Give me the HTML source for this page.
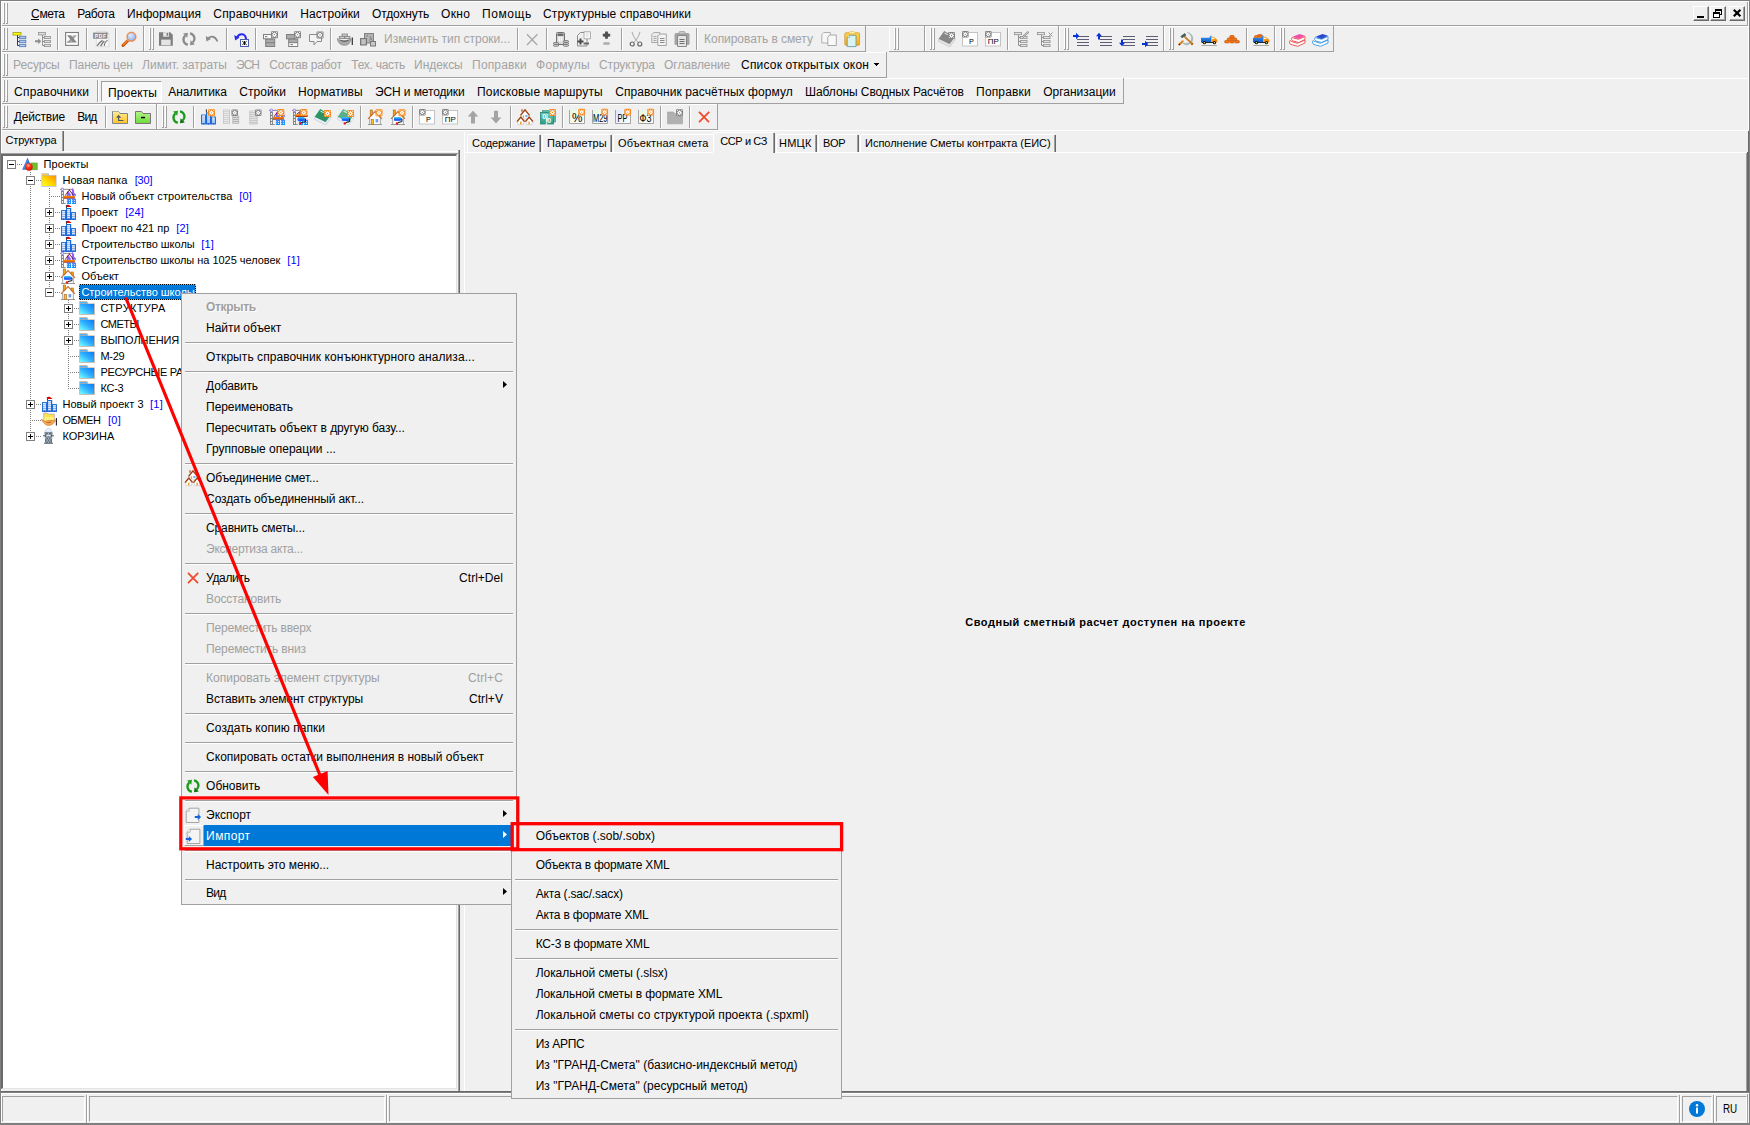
<!DOCTYPE html>
<html lang="ru"><head><meta charset="utf-8"><title>Смета</title>
<style>
html,body{margin:0;padding:0}
body{width:1750px;height:1125px;position:relative;overflow:hidden;background:#f0f0f0;font-family:"Liberation Sans",sans-serif;font-size:12px}
.a{position:absolute}
.g{position:absolute;left:0;top:0}
.t{position:absolute;white-space:nowrap;line-height:16px;font-family:"Liberation Sans",sans-serif}
svg{position:absolute;overflow:visible}

</style></head>
<body>
<div class="g" id="window-frame">
<div class="a" style="left:0px;top:0px;width:1750px;height:1px;background:#808080;"></div>
<div class="a" style="left:0px;top:1px;width:1750px;height:1px;background:#fff;"></div>
<div class="a" style="left:0px;top:0px;width:1px;height:1125px;background:#808080;"></div>
<div class="a" style="left:1px;top:1px;width:1px;height:1122px;background:#fff;"></div>
<div class="a" style="left:1749px;top:0px;width:1px;height:1125px;background:#808080;"></div>
<div class="a" style="left:1748px;top:1px;width:1px;height:129px;background:#fff;"></div>
</div>
<div class="g" id="menubar">
<div class="a" style="left:2px;top:25px;width:1746px;height:1px;background:#a0a0a0;"></div>
<div class="a" style="left:1747px;top:2px;width:1px;height:24px;background:#a0a0a0;"></div>
<div class="a" style="left:3px;top:3px;width:1px;height:20px;background:#fff;"></div>
<div class="a" style="left:4px;top:3px;width:1px;height:21px;background:#a0a0a0;"></div>
<div class="a" style="left:3px;top:23px;width:2px;height:1px;background:#a0a0a0;"></div>
<div class="a" style="left:6px;top:3px;width:1px;height:20px;background:#fff;"></div>
<div class="a" style="left:7px;top:3px;width:1px;height:21px;background:#a0a0a0;"></div>
<div class="a" style="left:6px;top:23px;width:2px;height:1px;background:#a0a0a0;"></div>
<span class="t" style="left:31.10px;top:6px;font-size:12px;color:#000;letter-spacing:-0.359px;">Смета</span>
<span class="t" style="left:77.30px;top:6px;font-size:12px;color:#000;letter-spacing:-0.402px;">Работа</span>
<span class="t" style="left:127.10px;top:6px;font-size:12px;color:#000;letter-spacing:0.035px;">Информация</span>
<span class="t" style="left:213.30px;top:6px;font-size:12px;color:#000;letter-spacing:0.170px;">Справочники</span>
<span class="t" style="left:300.30px;top:6px;font-size:12px;color:#000;letter-spacing:0.070px;">Настройки</span>
<span class="t" style="left:372.10px;top:6px;font-size:12px;color:#000;letter-spacing:-0.145px;">Отдохнуть</span>
<span class="t" style="left:441.10px;top:6px;font-size:12px;color:#000;letter-spacing:0.303px;">Окно</span>
<span class="t" style="left:482.10px;top:6px;font-size:12px;color:#000;letter-spacing:0.568px;">Помощь</span>
<span class="t" style="left:543.10px;top:6px;font-size:12px;color:#000;letter-spacing:0.102px;">Структурные справочники</span>
<div class="a" style="left:31px;top:19px;width:8px;height:1px;background:#000;"></div>
<div class="a" style="left:1693px;top:6px;width:16px;height:15px;background:#f0f0f0;box-sizing:border-box;border-top:1px solid #fff;border-left:1px solid #fff;border-right:1px solid #696969;border-bottom:1px solid #696969;"></div>
<div class="a" style="left:1694px;top:7px;width:14px;height:13px;box-sizing:border-box;border-right:1px solid #a0a0a0;border-bottom:1px solid #a0a0a0;"></div>
<div class="a" style="left:1697px;top:16px;width:7px;height:2px;background:#000;"></div>
<div class="a" style="left:1710px;top:6px;width:16px;height:15px;background:#f0f0f0;box-sizing:border-box;border-top:1px solid #fff;border-left:1px solid #fff;border-right:1px solid #696969;border-bottom:1px solid #696969;"></div>
<div class="a" style="left:1711px;top:7px;width:14px;height:13px;box-sizing:border-box;border-right:1px solid #a0a0a0;border-bottom:1px solid #a0a0a0;"></div>
<svg style="left:1710px;top:6px" width="16" height="15" viewBox="0 0 16 15" shape-rendering="crispEdges"><rect x="5" y="3" width="7" height="6" fill="#000"/><rect x="6" y="5" width="5" height="3" fill="#f0f0f0"/><rect x="3" y="6" width="7" height="6" fill="#000"/><rect x="4" y="8" width="5" height="3" fill="#fff"/></svg>
<div class="a" style="left:1729px;top:6px;width:16px;height:15px;background:#f0f0f0;box-sizing:border-box;border-top:1px solid #fff;border-left:1px solid #fff;border-right:1px solid #696969;border-bottom:1px solid #696969;"></div>
<div class="a" style="left:1730px;top:7px;width:14px;height:13px;box-sizing:border-box;border-right:1px solid #a0a0a0;border-bottom:1px solid #a0a0a0;"></div>
<svg style="left:1729px;top:6px" width="16" height="15" viewBox="0 0 16 15"><path d="M4.800 3.800l6.600 6.500M11.400 3.800l-6.600 6.500" stroke="#000" stroke-width="2.200" fill="none"/></svg>
</div>
<div class="g" id="toolbars">
<div class="a" style="left:2px;top:26px;width:1746px;height:1px;background:#fff;"></div>
<div class="a" style="left:2px;top:78px;width:1746px;height:1px;background:#fff;"></div>
<div class="a" style="left:2px;top:130px;width:1746px;height:1px;background:#fff;"></div>
<div class="a" style="left:2px;top:52px;width:885px;height:1px;background:#fff;"></div>
<div class="a" style="left:2px;top:104px;width:716px;height:1px;background:#fff;"></div>
<div class="a" style="left:2px;top:51px;width:142px;height:1px;background:#a0a0a0;"></div>
<div class="a" style="left:143px;top:26px;width:1px;height:26px;background:#a0a0a0;"></div>
<div class="a" style="left:3px;top:28px;width:1px;height:21px;background:#fff;"></div>
<div class="a" style="left:4px;top:28px;width:1px;height:22px;background:#a0a0a0;"></div>
<div class="a" style="left:3px;top:49px;width:2px;height:1px;background:#a0a0a0;"></div>
<div class="a" style="left:6px;top:28px;width:1px;height:21px;background:#fff;"></div>
<div class="a" style="left:7px;top:28px;width:1px;height:22px;background:#a0a0a0;"></div>
<div class="a" style="left:6px;top:49px;width:2px;height:1px;background:#a0a0a0;"></div>
<div class="a" style="left:144px;top:51px;width:722px;height:1px;background:#a0a0a0;"></div>
<div class="a" style="left:865px;top:26px;width:1px;height:26px;background:#a0a0a0;"></div>
<div class="a" style="left:144px;top:26px;width:1px;height:25px;background:#fff;"></div>
<div class="a" style="left:149px;top:28px;width:1px;height:21px;background:#fff;"></div>
<div class="a" style="left:150px;top:28px;width:1px;height:22px;background:#a0a0a0;"></div>
<div class="a" style="left:149px;top:49px;width:2px;height:1px;background:#a0a0a0;"></div>
<div class="a" style="left:152px;top:28px;width:1px;height:21px;background:#fff;"></div>
<div class="a" style="left:153px;top:28px;width:1px;height:22px;background:#a0a0a0;"></div>
<div class="a" style="left:152px;top:49px;width:2px;height:1px;background:#a0a0a0;"></div>
<div class="a" style="left:889px;top:51px;width:36px;height:1px;background:#a0a0a0;"></div>
<div class="a" style="left:924px;top:26px;width:1px;height:26px;background:#a0a0a0;"></div>
<div class="a" style="left:889px;top:26px;width:1px;height:25px;background:#fff;"></div>
<div class="a" style="left:894px;top:28px;width:1px;height:21px;background:#fff;"></div>
<div class="a" style="left:895px;top:28px;width:1px;height:22px;background:#a0a0a0;"></div>
<div class="a" style="left:894px;top:49px;width:2px;height:1px;background:#a0a0a0;"></div>
<div class="a" style="left:897px;top:28px;width:1px;height:21px;background:#fff;"></div>
<div class="a" style="left:898px;top:28px;width:1px;height:22px;background:#a0a0a0;"></div>
<div class="a" style="left:897px;top:49px;width:2px;height:1px;background:#a0a0a0;"></div>
<div class="a" style="left:925px;top:51px;width:134px;height:1px;background:#a0a0a0;"></div>
<div class="a" style="left:1058px;top:26px;width:1px;height:26px;background:#a0a0a0;"></div>
<div class="a" style="left:925px;top:26px;width:1px;height:25px;background:#fff;"></div>
<div class="a" style="left:930px;top:28px;width:1px;height:21px;background:#fff;"></div>
<div class="a" style="left:931px;top:28px;width:1px;height:22px;background:#a0a0a0;"></div>
<div class="a" style="left:930px;top:49px;width:2px;height:1px;background:#a0a0a0;"></div>
<div class="a" style="left:933px;top:28px;width:1px;height:21px;background:#fff;"></div>
<div class="a" style="left:934px;top:28px;width:1px;height:22px;background:#a0a0a0;"></div>
<div class="a" style="left:933px;top:49px;width:2px;height:1px;background:#a0a0a0;"></div>
<div class="a" style="left:1059px;top:51px;width:105px;height:1px;background:#a0a0a0;"></div>
<div class="a" style="left:1163px;top:26px;width:1px;height:26px;background:#a0a0a0;"></div>
<div class="a" style="left:1059px;top:26px;width:1px;height:25px;background:#fff;"></div>
<div class="a" style="left:1064px;top:28px;width:1px;height:21px;background:#fff;"></div>
<div class="a" style="left:1065px;top:28px;width:1px;height:22px;background:#a0a0a0;"></div>
<div class="a" style="left:1064px;top:49px;width:2px;height:1px;background:#a0a0a0;"></div>
<div class="a" style="left:1067px;top:28px;width:1px;height:21px;background:#fff;"></div>
<div class="a" style="left:1068px;top:28px;width:1px;height:22px;background:#a0a0a0;"></div>
<div class="a" style="left:1067px;top:49px;width:2px;height:1px;background:#a0a0a0;"></div>
<div class="a" style="left:1164px;top:51px;width:111px;height:1px;background:#a0a0a0;"></div>
<div class="a" style="left:1274px;top:26px;width:1px;height:26px;background:#a0a0a0;"></div>
<div class="a" style="left:1164px;top:26px;width:1px;height:25px;background:#fff;"></div>
<div class="a" style="left:1169px;top:28px;width:1px;height:21px;background:#fff;"></div>
<div class="a" style="left:1170px;top:28px;width:1px;height:22px;background:#a0a0a0;"></div>
<div class="a" style="left:1169px;top:49px;width:2px;height:1px;background:#a0a0a0;"></div>
<div class="a" style="left:1172px;top:28px;width:1px;height:21px;background:#fff;"></div>
<div class="a" style="left:1173px;top:28px;width:1px;height:22px;background:#a0a0a0;"></div>
<div class="a" style="left:1172px;top:49px;width:2px;height:1px;background:#a0a0a0;"></div>
<div class="a" style="left:1275px;top:51px;width:59px;height:1px;background:#a0a0a0;"></div>
<div class="a" style="left:1333px;top:26px;width:1px;height:26px;background:#a0a0a0;"></div>
<div class="a" style="left:1275px;top:26px;width:1px;height:25px;background:#fff;"></div>
<div class="a" style="left:1280px;top:28px;width:1px;height:21px;background:#fff;"></div>
<div class="a" style="left:1281px;top:28px;width:1px;height:22px;background:#a0a0a0;"></div>
<div class="a" style="left:1280px;top:49px;width:2px;height:1px;background:#a0a0a0;"></div>
<div class="a" style="left:1283px;top:28px;width:1px;height:21px;background:#fff;"></div>
<div class="a" style="left:1284px;top:28px;width:1px;height:22px;background:#a0a0a0;"></div>
<div class="a" style="left:1283px;top:49px;width:2px;height:1px;background:#a0a0a0;"></div>
<div class="a" style="left:57px;top:28px;width:1px;height:22px;background:#a0a0a0;"></div>
<div class="a" style="left:58px;top:28px;width:1px;height:22px;background:#fff;"></div>
<div class="a" style="left:86px;top:28px;width:1px;height:22px;background:#a0a0a0;"></div>
<div class="a" style="left:87px;top:28px;width:1px;height:22px;background:#fff;"></div>
<div class="a" style="left:115px;top:28px;width:1px;height:22px;background:#a0a0a0;"></div>
<div class="a" style="left:116px;top:28px;width:1px;height:22px;background:#fff;"></div>
<div class="a" style="left:226px;top:28px;width:1px;height:22px;background:#a0a0a0;"></div>
<div class="a" style="left:227px;top:28px;width:1px;height:22px;background:#fff;"></div>
<div class="a" style="left:255px;top:28px;width:1px;height:22px;background:#a0a0a0;"></div>
<div class="a" style="left:256px;top:28px;width:1px;height:22px;background:#fff;"></div>
<div class="a" style="left:330px;top:28px;width:1px;height:22px;background:#a0a0a0;"></div>
<div class="a" style="left:331px;top:28px;width:1px;height:22px;background:#fff;"></div>
<div class="a" style="left:517px;top:28px;width:1px;height:22px;background:#a0a0a0;"></div>
<div class="a" style="left:518px;top:28px;width:1px;height:22px;background:#fff;"></div>
<div class="a" style="left:546px;top:28px;width:1px;height:22px;background:#a0a0a0;"></div>
<div class="a" style="left:547px;top:28px;width:1px;height:22px;background:#fff;"></div>
<div class="a" style="left:621px;top:28px;width:1px;height:22px;background:#a0a0a0;"></div>
<div class="a" style="left:622px;top:28px;width:1px;height:22px;background:#fff;"></div>
<div class="a" style="left:696px;top:28px;width:1px;height:22px;background:#a0a0a0;"></div>
<div class="a" style="left:697px;top:28px;width:1px;height:22px;background:#fff;"></div>
<div class="a" style="left:1007px;top:28px;width:1px;height:22px;background:#a0a0a0;"></div>
<div class="a" style="left:1008px;top:28px;width:1px;height:22px;background:#fff;"></div>
<div class="a" style="left:1246px;top:28px;width:1px;height:22px;background:#a0a0a0;"></div>
<div class="a" style="left:1247px;top:28px;width:1px;height:22px;background:#fff;"></div>
<div class="a" style="left:2px;top:77px;width:885px;height:1px;background:#a0a0a0;"></div>
<div class="a" style="left:886px;top:52px;width:1px;height:26px;background:#a0a0a0;"></div>
<div class="a" style="left:3px;top:54px;width:1px;height:21px;background:#fff;"></div>
<div class="a" style="left:4px;top:54px;width:1px;height:22px;background:#a0a0a0;"></div>
<div class="a" style="left:3px;top:75px;width:2px;height:1px;background:#a0a0a0;"></div>
<div class="a" style="left:6px;top:54px;width:1px;height:21px;background:#fff;"></div>
<div class="a" style="left:7px;top:54px;width:1px;height:22px;background:#a0a0a0;"></div>
<div class="a" style="left:6px;top:75px;width:2px;height:1px;background:#a0a0a0;"></div>
<span class="t" style="left:13.10px;top:57px;font-size:12px;color:#a3a3a3;letter-spacing:-0.121px;">Ресурсы</span>
<span class="t" style="left:69.10px;top:57px;font-size:12px;color:#a3a3a3;letter-spacing:-0.114px;">Панель цен</span>
<span class="t" style="left:142.10px;top:57px;font-size:12px;color:#a3a3a3;letter-spacing:-0.014px;">Лимит. затраты</span>
<span class="t" style="left:236.10px;top:57px;font-size:12px;color:#a3a3a3;letter-spacing:-1.084px;">ЭСН</span>
<span class="t" style="left:269.30px;top:57px;font-size:12px;color:#a3a3a3;letter-spacing:-0.238px;">Состав работ</span>
<span class="t" style="left:351.30px;top:57px;font-size:12px;color:#a3a3a3;letter-spacing:-0.269px;">Тех. часть</span>
<span class="t" style="left:414.10px;top:57px;font-size:12px;color:#a3a3a3;letter-spacing:-0.056px;">Индексы</span>
<span class="t" style="left:472.10px;top:57px;font-size:12px;color:#a3a3a3;letter-spacing:0.159px;">Поправки</span>
<span class="t" style="left:536.10px;top:57px;font-size:12px;color:#a3a3a3;letter-spacing:0.230px;">Формулы</span>
<span class="t" style="left:599.10px;top:57px;font-size:12px;color:#a3a3a3;letter-spacing:-0.142px;">Структура</span>
<span class="t" style="left:664.10px;top:57px;font-size:12px;color:#a3a3a3;letter-spacing:-0.078px;">Оглавление</span>
<span class="t" style="left:741.10px;top:57px;font-size:12px;color:#000;letter-spacing:0.172px;">Список открытых окон</span>
<svg style="left:874px;top:63px" width="5" height="3" viewBox="0 0 5 3" shape-rendering="crispEdges"><path d="M0 0h5v1h-1v1h-1v1h-1v-1h-1v-1h-1z" fill="#000"/></svg>
<span class="t" style="left:384.10px;top:31px;font-size:12px;color:#a3a3a3;letter-spacing:-0.005px;">Изменить тип строки...</span>
<span class="t" style="left:704.10px;top:31px;font-size:12px;color:#a3a3a3;letter-spacing:-0.060px;">Копировать в смету</span>
<div class="a" style="left:2px;top:103px;width:1122px;height:1px;background:#a0a0a0;"></div>
<div class="a" style="left:1123px;top:78px;width:1px;height:26px;background:#a0a0a0;"></div>
<div class="a" style="left:3px;top:80px;width:1px;height:21px;background:#fff;"></div>
<div class="a" style="left:4px;top:80px;width:1px;height:22px;background:#a0a0a0;"></div>
<div class="a" style="left:3px;top:101px;width:2px;height:1px;background:#a0a0a0;"></div>
<div class="a" style="left:6px;top:80px;width:1px;height:21px;background:#fff;"></div>
<div class="a" style="left:7px;top:80px;width:1px;height:22px;background:#a0a0a0;"></div>
<div class="a" style="left:6px;top:101px;width:2px;height:1px;background:#a0a0a0;"></div>
<div class="a" style="left:97px;top:80px;width:1px;height:22px;background:#a0a0a0;"></div>
<div class="a" style="left:98px;top:80px;width:1px;height:22px;background:#fff;"></div>
<div class="a" style="left:101px;top:81px;width:61px;height:21px;background:#f8f8f8;box-sizing:border-box;border-top:1px solid #a0a0a0;border-left:1px solid #a0a0a0;border-right:1px solid #fff;border-bottom:1px solid #fff;"></div>
<span class="t" style="left:14.10px;top:84px;font-size:12px;color:#000;letter-spacing:0.210px;">Справочники</span>
<span class="t" style="left:108.10px;top:85px;font-size:12px;color:#000;letter-spacing:0.107px;">Проекты</span>
<span class="t" style="left:168.30px;top:84px;font-size:12px;color:#000;letter-spacing:-0.101px;">Аналитика</span>
<span class="t" style="left:239.30px;top:84px;font-size:12px;color:#000;letter-spacing:0.071px;">Стройки</span>
<span class="t" style="left:298.10px;top:84px;font-size:12px;color:#000;letter-spacing:0.091px;">Нормативы</span>
<span class="t" style="left:375.10px;top:84px;font-size:12px;color:#000;letter-spacing:-0.131px;">ЭСН и методики</span>
<span class="t" style="left:477.10px;top:84px;font-size:12px;color:#000;letter-spacing:0.156px;">Поисковые маршруты</span>
<span class="t" style="left:615.30px;top:84px;font-size:12px;color:#000;letter-spacing:0.057px;">Справочник расчётных формул</span>
<span class="t" style="left:805.10px;top:84px;font-size:12px;color:#000;letter-spacing:-0.087px;">Шаблоны Сводных Расчётов</span>
<span class="t" style="left:976.10px;top:84px;font-size:12px;color:#000;letter-spacing:0.159px;">Поправки</span>
<span class="t" style="left:1043.30px;top:84px;font-size:12px;color:#000;letter-spacing:-0.019px;">Организации</span>
<div class="a" style="left:2px;top:129px;width:155px;height:1px;background:#a0a0a0;"></div>
<div class="a" style="left:156px;top:104px;width:1px;height:26px;background:#a0a0a0;"></div>
<div class="a" style="left:3px;top:106px;width:1px;height:21px;background:#fff;"></div>
<div class="a" style="left:4px;top:106px;width:1px;height:22px;background:#a0a0a0;"></div>
<div class="a" style="left:3px;top:127px;width:2px;height:1px;background:#a0a0a0;"></div>
<div class="a" style="left:6px;top:106px;width:1px;height:21px;background:#fff;"></div>
<div class="a" style="left:7px;top:106px;width:1px;height:22px;background:#a0a0a0;"></div>
<div class="a" style="left:6px;top:127px;width:2px;height:1px;background:#a0a0a0;"></div>
<div class="a" style="left:157px;top:129px;width:561px;height:1px;background:#a0a0a0;"></div>
<div class="a" style="left:717px;top:104px;width:1px;height:26px;background:#a0a0a0;"></div>
<div class="a" style="left:157px;top:104px;width:1px;height:25px;background:#fff;"></div>
<div class="a" style="left:162px;top:106px;width:1px;height:21px;background:#fff;"></div>
<div class="a" style="left:163px;top:106px;width:1px;height:22px;background:#a0a0a0;"></div>
<div class="a" style="left:162px;top:127px;width:2px;height:1px;background:#a0a0a0;"></div>
<div class="a" style="left:165px;top:106px;width:1px;height:21px;background:#fff;"></div>
<div class="a" style="left:166px;top:106px;width:1px;height:22px;background:#a0a0a0;"></div>
<div class="a" style="left:165px;top:127px;width:2px;height:1px;background:#a0a0a0;"></div>
<span class="t" style="left:13.70px;top:109px;font-size:12px;color:#000;letter-spacing:-0.167px;">Действие</span>
<span class="t" style="left:77.30px;top:109px;font-size:12px;color:#000;letter-spacing:-0.859px;">Вид</span>
<div class="a" style="left:105px;top:106px;width:1px;height:22px;background:#a0a0a0;"></div>
<div class="a" style="left:106px;top:106px;width:1px;height:22px;background:#fff;"></div>
<div class="a" style="left:193px;top:106px;width:1px;height:22px;background:#a0a0a0;"></div>
<div class="a" style="left:194px;top:106px;width:1px;height:22px;background:#fff;"></div>
<div class="a" style="left:360px;top:106px;width:1px;height:22px;background:#a0a0a0;"></div>
<div class="a" style="left:361px;top:106px;width:1px;height:22px;background:#fff;"></div>
<div class="a" style="left:412px;top:106px;width:1px;height:22px;background:#a0a0a0;"></div>
<div class="a" style="left:413px;top:106px;width:1px;height:22px;background:#fff;"></div>
<div class="a" style="left:510px;top:106px;width:1px;height:22px;background:#a0a0a0;"></div>
<div class="a" style="left:511px;top:106px;width:1px;height:22px;background:#fff;"></div>
<div class="a" style="left:562px;top:106px;width:1px;height:22px;background:#a0a0a0;"></div>
<div class="a" style="left:563px;top:106px;width:1px;height:22px;background:#fff;"></div>
<div class="a" style="left:660px;top:106px;width:1px;height:22px;background:#a0a0a0;"></div>
<div class="a" style="left:661px;top:106px;width:1px;height:22px;background:#fff;"></div>
<div class="a" style="left:689px;top:106px;width:1px;height:22px;background:#a0a0a0;"></div>
<div class="a" style="left:690px;top:106px;width:1px;height:22px;background:#fff;"></div>
<svg width="0" height="0" style="left:0;top:0"><defs><linearGradient id="gy" x1="1" y1="0" x2="0" y2="1"><stop offset="0" stop-color="#ff8c00"/><stop offset="0.55" stop-color="#ffd800"/><stop offset="1" stop-color="#ffff20"/></linearGradient><linearGradient id="gb" x1="1" y1="0" x2="0" y2="1"><stop offset="0" stop-color="#0a78ff"/><stop offset="0.5" stop-color="#30b0ff"/><stop offset="1" stop-color="#78ffff"/></linearGradient><linearGradient id="gyf" x1="0" y1="0" x2="0" y2="1"><stop offset="0" stop-color="#ffec90"/><stop offset="1" stop-color="#ffc428"/></linearGradient><linearGradient id="ggf" x1="0" y1="0" x2="0" y2="1"><stop offset="0" stop-color="#b8f48c"/><stop offset="1" stop-color="#68dc38"/></linearGradient><linearGradient id="gcl" x1="0" y1="0" x2="0" y2="1"><stop offset="0" stop-color="#ffd450"/><stop offset="1" stop-color="#ffa808"/></linearGradient><linearGradient id="grl" x1="0" y1="0" x2="0" y2="1"><stop offset="0" stop-color="#40d0ff"/><stop offset="1" stop-color="#0030ff"/></linearGradient><linearGradient id="gor" x1="0" y1="0" x2="0" y2="1"><stop offset="0" stop-color="#ff8800"/><stop offset="0.45" stop-color="#f87400"/><stop offset="1" stop-color="#802020"/></linearGradient><linearGradient id="gtl" x1="0" y1="0" x2="1" y2="1"><stop offset="0" stop-color="#e4f8e0"/><stop offset="1" stop-color="#ffffff"/></linearGradient><linearGradient id="gtb" x1="0" y1="0" x2="1" y2="1"><stop offset="0" stop-color="#d8e8ff"/><stop offset="1" stop-color="#ffffff"/></linearGradient><linearGradient id="gte" x1="0" y1="0" x2="0" y2="1"><stop offset="0" stop-color="#6cc8b4"/><stop offset="1" stop-color="#2a9c88"/></linearGradient><linearGradient id="gpv" x1="0" y1="0" x2="0" y2="1"><stop offset="0" stop-color="#b45cf0"/><stop offset="1" stop-color="#7070ff"/></linearGradient><linearGradient id="gbl" x1="0" y1="0" x2="0" y2="1"><stop offset="0" stop-color="#4c84ff"/><stop offset="1" stop-color="#0894ff"/></linearGradient><linearGradient id="gwp" x1="0" y1="0" x2="0" y2="1"><stop offset="0" stop-color="#a8ccf8"/><stop offset="1" stop-color="#6c9cec"/></linearGradient><linearGradient id="gtk" x1="0" y1="0" x2="0" y2="1"><stop offset="0" stop-color="#3c94f4"/><stop offset="1" stop-color="#0c58c4"/></linearGradient><linearGradient id="gcb" x1="0" y1="0" x2="1" y2="1"><stop offset="0" stop-color="#ffb828"/><stop offset="1" stop-color="#f07000"/></linearGradient><radialGradient id="grs" cx="0.4" cy="0.3" r="0.7"><stop offset="0" stop-color="#ffb0a0"/><stop offset="0.4" stop-color="#ff3818"/><stop offset="1" stop-color="#d01000"/></radialGradient><radialGradient id="gln" cx="0.4" cy="0.35" r="0.7"><stop offset="0" stop-color="#e0ecff"/><stop offset="1" stop-color="#88aaf0"/></radialGradient></defs></svg>
<svg style="left:12px;top:31px" width="16" height="16" viewBox="0 0 16 16"><rect x="1" y="1.5" width="8" height="2.6" fill="#ffff00" stroke="#a09a28" stroke-width="0.8"/><path d="M5.5 4.2V14.5M5.5 6.5H7.5M5.5 10.5H7.5M5.5 14.5H7.5" stroke="#28386c" stroke-width="1" fill="none"/><rect x="7.6" y="5.3" width="6.2" height="2.4" fill="#a8d0f4" stroke="#5874b0" stroke-width="0.8"/><rect x="7.6" y="9.3" width="6.2" height="2.4" fill="#a8d0f4" stroke="#5874b0" stroke-width="0.8"/><rect x="7.6" y="13.3" width="6.2" height="2.4" fill="#a8d0f4" stroke="#5874b0" stroke-width="0.8"/></svg>
<svg style="left:35px;top:31px" width="16" height="16" viewBox="0 0 16 16"><rect x="3.4" y="1.5" width="7" height="2.4" fill="#e0e0e0" stroke="#909090" stroke-width="0.8"/><path d="M7.5 4V14.5M7.5 6.5H9.5M7.5 10.5H9.5M7.5 14.5H9.5" stroke="#909090" stroke-width="1" fill="none"/><rect x="9.5" y="5.4" width="6" height="2.2" fill="#e0e0e0" stroke="#909090" stroke-width="0.8"/><rect x="9.5" y="9.4" width="6" height="2.2" fill="#e0e0e0" stroke="#909090" stroke-width="0.8"/><rect x="9.5" y="13.4" width="6" height="2.2" fill="#e0e0e0" stroke="#909090" stroke-width="0.8"/><path d="M0 9.2h3.2v-2l3 3l-3 3v-2h-3.2z" fill="#8c8c8c"/></svg>
<svg style="left:64px;top:31px" width="16" height="16" viewBox="0 0 16 16"><rect x="1.600" y="1.500" width="12.800" height="12.900" fill="#fdfdfd" stroke="#7e7e7e" stroke-width="1.100"/><path d="M9.600 4.200H12.900L6.400 11.600H3z" fill="#a4a4a4"/><path d="M3 4.200H7L12.900 11.600H8.900z" fill="#878787"/><path d="M3 10.500h5.500l0.900 1.100H3z" fill="#909090"/></svg>
<svg style="left:93px;top:31px" width="16" height="16" viewBox="0 0 16 16"><path d="M3.300 0.400h10l2.600 2.600v12.700h-12.600z" fill="#f6f6f6" stroke="#c8c8c8" stroke-width="0.500"/><path d="M13.300 0.400v2.600h2.600z" fill="#b0b0b0"/><rect x="0.100" y="1.600" width="14.300" height="6.100" fill="#8a8a8a"/><path d="M4.100 14.900C6 12 7.500 10.500 9.600 9.400M7.600 15.100C8.800 13 10 11.200 11.300 10" stroke="#787878" stroke-width="1.300" fill="none"/><path d="M14.700 9.100C12.500 10.500 11.300 12.500 11.300 15.100" stroke="#787878" stroke-width="1.100" fill="none"/><text x="1.700" y="6.900" font-family="Liberation Sans,sans-serif" font-size="5" font-weight="bold" fill="#fff" textLength="11.300" opacity="0.99">PDF</text></svg>
<svg style="left:121px;top:31px" width="16" height="16" viewBox="0 0 16 16"><path d="M7.2 9.2L2 14.4" stroke="#c85000" stroke-width="3" stroke-linecap="round"/><path d="M7 9L2.2 13.8" stroke="#f08838" stroke-width="1.3" stroke-linecap="round"/><circle cx="10.4" cy="5.8" r="4.4" fill="url(#gln)" stroke="#e88040" stroke-width="1.4"/><circle cx="10.4" cy="5.8" r="5" fill="none" stroke="#f8c8a0" stroke-width="0.5"/></svg>
<svg style="left:158px;top:31px" width="16" height="16" viewBox="0 0 16 16"><path d="M1 1.2h11.200l2.600 2.600v11h-13.800z" fill="#7e7e7e"/><rect x="5.200" y="1.200" width="5.800" height="4.500" fill="#e8e8e8"/><rect x="8.600" y="2" width="1.600" height="2.800" fill="#7e7e7e"/><rect x="3.200" y="8.600" width="9.400" height="5.600" fill="#e4e4e4"/></svg>
<svg style="left:181px;top:31px" width="16" height="16" viewBox="0 0 16 16"><path d="M6.9 13.7A5.2 5.2 0 0 1 4.2 4.7" fill="none" stroke="#8c8c8c" stroke-width="2.3"/><path d="M2.1 2.4L6.9 1.8L6.3 6.8z" fill="#8c8c8c"/><path d="M9 2.3A5.2 5.2 0 0 1 11.7 11.3" fill="none" stroke="#8c8c8c" stroke-width="2.3"/><path d="M13.8 13.6L9 14.2L9.600 9.200z" fill="#8c8c8c"/></svg>
<svg style="left:204px;top:31px" width="16" height="16" viewBox="0 0 16 16"><path d="M3.5 8.5C6 4.5 11 4.5 13.5 10.5" fill="none" stroke="#8c8c8c" stroke-width="1.8"/><path d="M1.8 5l.6 5.5l4.6-2.4z" fill="#8c8c8c"/></svg>
<svg style="left:233px;top:31px" width="16" height="16" viewBox="0 0 16 16"><path d="M4 6.5C6 1.8 12.5 2 13 8" fill="none" stroke="#2a2af0" stroke-width="2"/><path d="M1.2 4.2l1 5.2l4.4-2.8z" fill="#2a2af0"/><rect x="7.5" y="8.5" width="8" height="7" fill="#fff" stroke="#4c5cb0" stroke-width="1"/><path d="M11.5 10v4M9.3 10.2l4.4 3.6M13.7 10.2l-4.4 3.6" stroke="#000" stroke-width="0.9"/></svg>
<svg style="left:262px;top:31px" width="16" height="16" viewBox="0 0 16 16"><rect x="3.7" y="8" width="9" height="7.5" fill="#ababab" stroke="#808080" stroke-width="1"/><path d="M3.7 11.7h9" stroke="#808080" stroke-width="1"/><rect x="1.5" y="3.5" width="8.5" height="4.3" fill="#fafafa" stroke="#808080" stroke-width="1"/><path d="M3 5.7h2.4" stroke="#707070" stroke-width="1"/><rect x="9" y="0.2" width="7" height="7" rx="1" fill="#828282"/><path d="M12.5 1.25L14.95 3.7L12.5 6.15L10.05 3.7z" fill="#fff"/><rect x="9.84" y="1.04" width="0.98" height="0.98" fill="#fff"/><rect x="9.84" y="5.38" width="0.98" height="0.98" fill="#fff"/><rect x="14.18" y="1.04" width="0.98" height="0.98" fill="#fff"/><rect x="14.18" y="5.38" width="0.98" height="0.98" fill="#fff"/><circle cx="12.5" cy="3.7" r="0.63" fill="#828282"/></svg>
<svg style="left:285px;top:31px" width="16" height="16" viewBox="0 0 16 16"><rect x="3.7" y="8" width="9" height="7.5" fill="#ababab" stroke="#808080" stroke-width="1"/><path d="M3.7 11.7h9" stroke="#808080" stroke-width="1"/><rect x="4.2" y="12.2" width="8" height="2.8" fill="#fafafa"/><path d="M5.5 13.6h2.4" stroke="#707070" stroke-width="1"/><rect x="1.5" y="3.5" width="8.5" height="4.3" fill="#ababab" stroke="#808080" stroke-width="1"/><rect x="9" y="0.2" width="7" height="7" rx="1" fill="#828282"/><path d="M12.5 1.25L14.95 3.7L12.5 6.15L10.05 3.7z" fill="#fff"/><rect x="9.84" y="1.04" width="0.98" height="0.98" fill="#fff"/><rect x="9.84" y="5.38" width="0.98" height="0.98" fill="#fff"/><rect x="14.18" y="1.04" width="0.98" height="0.98" fill="#fff"/><rect x="14.18" y="5.38" width="0.98" height="0.98" fill="#fff"/><circle cx="12.5" cy="3.7" r="0.63" fill="#828282"/></svg>
<svg style="left:308px;top:31px" width="16" height="16" viewBox="0 0 16 16"><path d="M1.5 3.5h9v3h3v4h-4.5l-3 3.5v-3.5h-4.5z" fill="#f4f4f4" stroke="#8c8c8c" stroke-width="1"/><rect x="8.5" y="0.5" width="7" height="7" rx="1" fill="#828282"/><path d="M12.0 1.55L14.45 4.0L12.0 6.45L9.55 4.0z" fill="#fff"/><rect x="9.34" y="1.34" width="0.98" height="0.98" fill="#fff"/><rect x="9.34" y="5.68" width="0.98" height="0.98" fill="#fff"/><rect x="13.68" y="1.34" width="0.98" height="0.98" fill="#fff"/><rect x="13.68" y="5.68" width="0.98" height="0.98" fill="#fff"/><circle cx="12.0" cy="4.0" r="0.63" fill="#828282"/></svg>
<svg style="left:337px;top:31px" width="16" height="16" viewBox="0 0 16 16"><rect x="5" y="3" width="5.5" height="2.2" fill="#d0d0d0" stroke="#808080" stroke-width="0.8"/><rect x="2.3" y="5.4" width="5.2" height="2.2" fill="#d0d0d0" stroke="#808080" stroke-width="0.8"/><rect x="7.7" y="5.4" width="5.2" height="2.2" fill="#d0d0d0" stroke="#808080" stroke-width="0.8"/><path d="M0.3 7.5C1 12.5 4 14.3 7.5 14.3S13.5 12.5 14 7.5C10 10.5 4 10.5 .3 7.5z" fill="#a8a8a8" stroke="#808080" stroke-width="0.6"/><path d="M3.5 9.3c2.5 1.3 5.5 1.3 8 0" stroke="#606060" stroke-width="1.2" fill="none"/><path d="M15.3 6.5v7.5" stroke="#303030" stroke-width="1.2"/></svg>
<svg style="left:360px;top:31px" width="16" height="16" viewBox="0 0 16 16"><rect x="4.5" y="2.5" width="9" height="9.5" fill="#b4b4b4" stroke="#808080" stroke-width="1"/><path d="M6 4.8h2M10 5l1 2.5l-1.5 2M11 7.5l1.5 2" stroke="#707070" stroke-width="0.8" fill="none"/><rect x="0.5" y="7.5" width="6" height="6.5" fill="#a8a8a8" stroke="#787878" stroke-width="1"/><path d="M2.3 8.5v4.5M3.6 8.5v4.5M4.9 8.5v4.5" stroke="#e0e0e0" stroke-width="0.6"/><rect x="10.5" y="10.5" width="5" height="4.5" fill="#c8c8c8" stroke="#787878" stroke-width="1"/></svg>
<svg style="left:524px;top:31px" width="16" height="16" viewBox="0 0 16 16"><path d="M3 3.2L13.2 14M13.4 3.2L3 14" stroke="#a8a8a8" stroke-width="1.3" fill="none"/></svg>
<svg style="left:553px;top:31px" width="16" height="16" viewBox="0 0 16 16"><rect x="3.5" y="1.5" width="8" height="12" rx="1" fill="#d8d8d8" stroke="#707070" stroke-width="1"/><rect x="4.5" y="2.5" width="6" height="2.4" fill="#686868"/><path d="M5 7h5M5 9h5M6.5 5.8v5M8.5 5.8v5" stroke="#fff" stroke-width="0.7"/><rect x="0.5" y="13.6" width="5" height="1.6" rx="0.8" fill="#e8e8e8" stroke="#606060" stroke-width="0.8"/><rect x="0.5" y="11.6" width="5" height="1.6" rx="0.8" fill="#e8e8e8" stroke="#606060" stroke-width="0.8"/><rect x="10.5" y="13.6" width="5" height="1.6" rx="0.8" fill="#e8e8e8" stroke="#606060" stroke-width="0.8"/><rect x="10.5" y="11.6" width="5" height="1.6" rx="0.8" fill="#e8e8e8" stroke="#606060" stroke-width="0.8"/><rect x="10.5" y="9.6" width="5" height="1.6" rx="0.8" fill="#e8e8e8" stroke="#606060" stroke-width="0.8"/></svg>
<svg style="left:576px;top:31px" width="16" height="16" viewBox="0 0 16 16"><path d="M4.5 1.5h6.5v13.5h-9.5v-10.5z" fill="#f0f0f0" stroke="#8c8c8c" stroke-width="1"/><rect x="8" y="0.8" width="6.5" height="7" fill="#f8f8f8" stroke="#a0a0a0" stroke-width="0.8"/><path d="M10 3h2.5M10 5h2.5" stroke="#c0c0c0" stroke-width="0.6"/><path d="M1.5 10.5h6M4.5 7.5v6" stroke="#484848" stroke-width="2"/><rect x="7.5" y="11.5" width="5.5" height="2" fill="#686868"/></svg>
<svg style="left:599px;top:31px" width="16" height="16" viewBox="0 0 16 16"><path d="M7.500 0.600v7.200M3.800 4.200h7.400" stroke="#505050" stroke-width="2.800"/><circle cx="7.500" cy="4.200" r="2.300" fill="#505050"/><rect x="4.200" y="11.200" width="6.600" height="2.600" rx="1" fill="#acacac"/></svg>
<svg style="left:628px;top:31px" width="16" height="16" viewBox="0 0 16 16"><path d="M4 0.8C5 5 7.5 9 10.5 11.8M12 0.8C11 5 8.5 9 5.5 11.8" stroke="#a8a8a8" stroke-width="1" fill="none"/><circle cx="4.2" cy="13" r="2" fill="none" stroke="#686868" stroke-width="1.2"/><circle cx="11.8" cy="13" r="2" fill="none" stroke="#686868" stroke-width="1.2"/></svg>
<svg style="left:651px;top:31px" width="16" height="16" viewBox="0 0 16 16"><path d="M0.8 3.5l2-2h6v10h-8z" fill="#ececec" stroke="#a0a0a0" stroke-width="0.9"/><path d="M6.8 5l2-2h6.5v11.5h-8.5z" fill="#f4f4f4" stroke="#9a9a9a" stroke-width="0.9"/><path d="M9 7.500h4.500M9 9.500h4.500M9 11.500h4.500" stroke="#8c8c8c" stroke-width="1"/><path d="M2.500 5.500h3M2.500 7.500h3M2.500 9.500h3" stroke="#a8a8a8" stroke-width="1"/></svg>
<svg style="left:674px;top:31px" width="16" height="16" viewBox="0 0 16 16"><rect x="0.5" y="2" width="15" height="12" rx="1.5" fill="#a4a4a4"/><rect x="5" y="0.5" width="6" height="2.5" rx="1" fill="#c8c8c8" stroke="#909090" stroke-width="0.6"/><path d="M5 4.5h-1.5v11h9v-11z" fill="#e4e4e4" stroke="#808080" stroke-width="0.9"/><path d="M5.500 8.500h5M5.500 10.500h5M5.500 12.500h5" stroke="#707070" stroke-width="1"/></svg>
<svg style="left:821px;top:31px" width="16" height="16" viewBox="0 0 16 16"><path d="M0.8 3.5l2-2h6.5v10.5h-8.5z" fill="#f6f6f6" stroke="#a8a8a8" stroke-width="0.9"/><path d="M6.8 6l2-2h6.5v10.5h-8.5z" fill="#f8f8f8" stroke="#a0a0a0" stroke-width="0.9"/></svg>
<svg style="left:844px;top:31px" width="16" height="16" viewBox="0 0 16 16"><rect x="0.8" y="1.8" width="14.8" height="12.5" rx="1.2" fill="url(#gcl)" stroke="#d09838" stroke-width="0.8"/><ellipse cx="8.2" cy="1.6" rx="3" ry="1.2" fill="#fff0a0" stroke="#e0b040" stroke-width="0.5"/><path d="M5.5 4.3h6.5v11.3h-8.8v-9z" fill="#d8f4f2" stroke="#6c9ca4" stroke-width="0.9"/><path d="M3.3 6.5h2.2v-2.2" fill="#fff" stroke="#6c9ca4" stroke-width="0.6"/></svg>
<svg style="left:939px;top:31px" width="16" height="16" viewBox="0 0 16 16"><path d="M-0.3 7.7L10.5 13L15.9 6V9L10.7 15.9L-0.3 10.5z" fill="#e6e6e6" stroke="#b0b0b0" stroke-width="0.5"/><path d="M5.2 0.1L15.9 6L10.5 13L-0.3 7.7z" fill="#868686"/><path d="M6 2.2l2.300 1.300" stroke="#d8d8d8" stroke-width="1.300" stroke-linecap="round"/><rect x="9" y="1" width="7" height="7" rx="1" fill="#828282"/><path d="M12.5 2.05L14.95 4.5L12.5 6.95L10.05 4.5z" fill="#fff"/><rect x="9.84" y="1.84" width="0.98" height="0.98" fill="#fff"/><rect x="9.84" y="6.18" width="0.98" height="0.98" fill="#fff"/><rect x="14.18" y="1.84" width="0.98" height="0.98" fill="#fff"/><rect x="14.18" y="6.18" width="0.98" height="0.98" fill="#fff"/><circle cx="12.5" cy="4.5" r="0.63" fill="#828282"/></svg>
<svg style="left:962px;top:31px" width="16" height="16" viewBox="0 0 16 16"><rect x="0.5" y="1.5" width="15" height="13.5" fill="#fff" stroke="#c4c4c4" stroke-width="1"/><rect x="0" y="0" width="6.6" height="6.6" rx="1" fill="#828282"/><path d="M3.3 0.99L5.61 3.3L3.3 5.61L0.99 3.3z" fill="#fff"/><rect x="0.79" y="0.79" width="0.92" height="0.92" fill="#fff"/><rect x="0.79" y="4.88" width="0.92" height="0.92" fill="#fff"/><rect x="4.88" y="0.79" width="0.92" height="0.92" fill="#fff"/><rect x="4.88" y="4.88" width="0.92" height="0.92" fill="#fff"/><circle cx="3.3" cy="3.3" r="0.59" fill="#828282"/><text x="6.9" y="12.9" font-family="Liberation Sans,sans-serif" font-size="7.2" fill="#000">Р</text></svg>
<svg style="left:985px;top:31px" width="16" height="16" viewBox="0 0 16 16"><rect x="0.5" y="1.5" width="15" height="13.5" fill="#fff" stroke="#c4c4c4" stroke-width="1"/><rect x="0" y="0" width="6.6" height="6.6" rx="1" fill="#828282"/><path d="M3.3 0.99L5.61 3.3L3.3 5.61L0.99 3.3z" fill="#fff"/><rect x="0.79" y="0.79" width="0.92" height="0.92" fill="#fff"/><rect x="0.79" y="4.88" width="0.92" height="0.92" fill="#fff"/><rect x="4.88" y="0.79" width="0.92" height="0.92" fill="#fff"/><rect x="4.88" y="4.88" width="0.92" height="0.92" fill="#fff"/><circle cx="3.3" cy="3.3" r="0.59" fill="#828282"/><text x="2.8" y="12.9" font-family="Liberation Sans,sans-serif" font-size="7.2" fill="#000" textLength="11" lengthAdjust="spacingAndGlyphs">ПР</text></svg>
<svg style="left:1014px;top:31px" width="16" height="16" viewBox="0 0 16 16"><rect x="0.5" y="1.5" width="7" height="2.2" fill="#e4e4e4" stroke="#909090" stroke-width="0.8"/><path d="M4.5 4V14.5M4.5 6.5H6.5M4.5 10.5H6.5M4.5 14.5H6.5" stroke="#909090" fill="none"/><rect x="6.5" y="5.4" width="6.5" height="2.2" fill="#e4e4e4" stroke="#909090" stroke-width="0.8"/><rect x="6.5" y="9.4" width="6.5" height="2.2" fill="#e4e4e4" stroke="#909090" stroke-width="0.8"/><rect x="6.5" y="13.4" width="6.5" height="2.2" fill="#e4e4e4" stroke="#909090" stroke-width="0.8"/><path d="M8.5 6.2L14.5 0.8" stroke="#909090" stroke-width="2"/><path d="M8.8 6L14 1.2" stroke="#e0e0e0" stroke-width="0.7"/></svg>
<svg style="left:1037px;top:31px" width="16" height="16" viewBox="0 0 16 16"><rect x="0.5" y="1.5" width="7" height="2.2" fill="#e4e4e4" stroke="#909090" stroke-width="0.8"/><path d="M4.5 4V14.5M4.5 6.5H6.5M4.5 10.5H6.5M4.5 14.5H6.5" stroke="#909090" fill="none"/><rect x="6.5" y="5.4" width="6.5" height="2.2" fill="#e4e4e4" stroke="#909090" stroke-width="0.8"/><rect x="6.5" y="9.4" width="6.5" height="2.2" fill="#e4e4e4" stroke="#909090" stroke-width="0.8"/><rect x="6.5" y="13.4" width="6.5" height="2.2" fill="#e4e4e4" stroke="#909090" stroke-width="0.8"/><path d="M11.5 1.5l4 4M15.5 1.5l-4 4" stroke="#909090" stroke-width="0.9"/></svg>
<svg style="left:1073px;top:31px" width="16" height="16" viewBox="0 0 16 16"><rect x="4" y="5" width="12" height="1" fill="#5c5c74"/><rect x="4" y="8" width="12" height="1" fill="#5c5c74"/><rect x="4" y="11" width="12" height="1" fill="#5c5c74"/><rect x="4" y="14" width="12" height="1" fill="#5c5c74"/><path d="M0 4h3v-2.2l3.3 3.2l-3.3 3.2v-2.2h-3z" fill="#0832d8"/></svg>
<svg style="left:1096px;top:31px" width="16" height="16" viewBox="0 0 16 16"><rect x="4" y="5" width="12" height="1" fill="#5c5c74"/><rect x="4" y="8" width="12" height="1" fill="#5c5c74"/><rect x="4" y="11" width="12" height="1" fill="#5c5c74"/><rect x="4" y="14" width="12" height="1" fill="#5c5c74"/><path d="M2 8.5v-3.3h-2l3-3.4l3 3.4h-2v3.3z" fill="#0832d8"/></svg>
<svg style="left:1119px;top:31px" width="16" height="16" viewBox="0 0 16 16"><rect x="4" y="5" width="12" height="1" fill="#5c5c74"/><rect x="4" y="8" width="12" height="1" fill="#5c5c74"/><rect x="4" y="11" width="12" height="1" fill="#5c5c74"/><rect x="4" y="14" width="12" height="1" fill="#5c5c74"/><path d="M2 8.5v3.3h-2l3 3.4l3-3.4h-2v-3.3z" fill="#0832d8"/></svg>
<svg style="left:1142px;top:31px" width="16" height="16" viewBox="0 0 16 16"><rect x="4" y="5" width="12" height="1" fill="#5c5c74"/><rect x="4" y="8" width="12" height="1" fill="#5c5c74"/><rect x="4" y="11" width="12" height="1" fill="#5c5c74"/><rect x="4" y="14" width="12" height="1" fill="#5c5c74"/><path d="M0 12h3v-2.2l3.3 3.2l-3.3 3.2v-2.2h-3z" fill="#0832d8"/></svg>
<svg style="left:1178px;top:31px" width="16" height="16" viewBox="0 0 16 16"><path d="M9.300 1.300C16 3 17.500 11.500 9.500 13.800C7.500 14.200 5.500 13.200 4.500 11.600C7 13 10.500 12.800 12.500 10.500C14.800 7.500 13.500 3.500 9.300 1.300z" fill="#a4b8b8" stroke="#88a0a0" stroke-width="0.400"/><path d="M1.200 13.500L4.700 10.200" stroke="#d88424" stroke-width="2" stroke-linecap="round"/><path d="M1 13.800l0.800-0.800" stroke="#402000" stroke-width="1.600"/><path d="M6.300 5.300L14.500 13.200" stroke="#e09030" stroke-width="1.700"/><path d="M6.300 5.300L14.500 13.200" stroke="#a05c10" stroke-width="1.700" stroke-dasharray="0.400 0.800"/><path d="M13.600 12.400l1.200 1.100" stroke="#b06010" stroke-width="2.400"/><path d="M3.200 6.300L7.600 3.100" stroke="#4c6060" stroke-width="2.600"/></svg>
<svg style="left:1201px;top:31px" width="16" height="16" viewBox="0 0 16 16"><path d="M0 6.800H8.400L9.400 4.800H11L10.200 6.800V11.600H0z" fill="url(#gtk)"/><path d="M10.200 5.800h2.600l3.400 3v2.800h-6z" fill="url(#gcb)"/><path d="M11 6.800h1.600l1.300 1.300h-2.900z" fill="#d4ffff"/><rect x="1" y="11" width="13.500" height="0.900" fill="#181818"/><circle cx="3.400" cy="11.700" r="1.600" fill="#101010"/><circle cx="3.400" cy="11.700" r="0.650" fill="#f4f490"/><circle cx="13.400" cy="11.700" r="1.600" fill="#101010"/><circle cx="13.400" cy="11.700" r="0.650" fill="#f4f490"/><rect x="0.300" y="14" width="15.700" height="0.700" fill="#8c8c8c"/></svg>
<svg style="left:1224px;top:31px" width="16" height="16" viewBox="0 0 16 16"><rect x="5.7" y="4.5" width="4.6" height="2.4" rx="1" fill="#f87810" stroke="#c04800" stroke-width="0.6"/><rect x="3.2" y="7" width="4.6" height="2.4" rx="1" fill="#f87810" stroke="#c04800" stroke-width="0.6"/><rect x="8.2" y="7" width="4.6" height="2.4" rx="1" fill="#f87810" stroke="#c04800" stroke-width="0.6"/><rect x="0.6" y="9.5" width="4.6" height="2.4" rx="1" fill="#f87810" stroke="#c04800" stroke-width="0.6"/><rect x="5.7" y="9.5" width="4.6" height="2.4" rx="1" fill="#f87810" stroke="#c04800" stroke-width="0.6"/><rect x="10.8" y="9.5" width="4.6" height="2.4" rx="1" fill="#f87810" stroke="#c04800" stroke-width="0.6"/></svg>
<svg style="left:1253px;top:31px" width="16" height="16" viewBox="0 0 16 16"><rect x="1.5" y="4.6" width="4.6" height="2.4" rx="1" fill="#f87810" stroke="#c04800" stroke-width="0.6"/><rect x="4.5" y="3.6" width="4.6" height="2.4" rx="1" fill="#f87810" stroke="#c04800" stroke-width="0.6"/><rect x="5.5" y="5" width="4.6" height="2.4" rx="1" fill="#f87810" stroke="#c04800" stroke-width="0.6"/><rect x="1" y="5.800" width="7.500" height="1.500" fill="#f87810"/><path d="M0 6.800H8.400L9.400 4.800H11L10.200 6.800V11.600H0z" fill="url(#gtk)"/><path d="M10.200 5.800h2.600l3.400 3v2.800h-6z" fill="url(#gcb)"/><path d="M11 6.800h1.600l1.300 1.300h-2.900z" fill="#d4ffff"/><rect x="1" y="11" width="13.500" height="0.900" fill="#181818"/><circle cx="3.400" cy="11.700" r="1.600" fill="#101010"/><circle cx="3.400" cy="11.700" r="0.650" fill="#f4f490"/><circle cx="13.400" cy="11.700" r="1.600" fill="#101010"/><circle cx="13.400" cy="11.700" r="0.650" fill="#f4f490"/><rect x="0.300" y="14" width="15.700" height="0.700" fill="#8c8c8c"/></svg>
<svg style="left:1289px;top:31px" width="16" height="16" viewBox="0 0 16 16"><path d="M1 9.5C0 11 .5 13 2 13.5L8.5 15.3L16 12v-3L8.5 12.3L2.5 10.5z" fill="#fff" stroke="#f04848" stroke-width="0.9"/><path d="M3 6.5C2.2 8 2.6 9.5 4 10L9.5 11.5L16 8.5v-3L9.5 8.3L4.5 7z" fill="#fff" stroke="#f04848" stroke-width="0.9"/><path d="M3.5 5.8L10.5 3L16 4.8L9.5 8z" fill="#f050a8"/></svg>
<svg style="left:1312px;top:31px" width="16" height="16" viewBox="0 0 16 16"><path d="M1 9.5C0 11 .5 13 2 13.5L8.5 15.3L16 12v-3L8.5 12.3L2.5 10.5z" fill="#fff" stroke="#3098e8" stroke-width="0.9"/><path d="M3 6.5C2.2 8 2.6 9.5 4 10L9.5 11.5L16 8.5v-3L9.5 8.3L4.5 7z" fill="#fff" stroke="#3098e8" stroke-width="0.9"/><path d="M3.5 5.8L10.5 3L16 4.8L9.5 8z" fill="#2848d0"/></svg>
<svg style="left:112px;top:109px" width="16" height="16" viewBox="0 0 16 16"><path d="M0.5 2.5h6l1.5 2h7.5v10h-15z" fill="url(#gyf)" stroke="#80848c" stroke-width="1"/><path d="M1 3h5.300l0.700 1.300" stroke="#fff0a0" stroke-width="0.8" fill="none"/><path d="M6.600 5.800L9.300 8.800H4z" fill="#505868"/><path d="M6.600 8.500V11.500H11.500" stroke="#505868" stroke-width="1.2" fill="none"/></svg>
<svg style="left:135px;top:109px" width="16" height="16" viewBox="0 0 16 16"><path d="M0.5 2.5h6l1.5 2h7.5v10h-15z" fill="url(#ggf)" stroke="#84707c" stroke-width="1"/><rect x="6" y="7.8" width="4" height="1.5" fill="#000"/></svg>
<svg style="left:171px;top:109px" width="16" height="16" viewBox="0 0 16 16"><path d="M6.9 13.7A5.2 5.2 0 0 1 4.2 4.7" fill="none" stroke="#1c9c1c" stroke-width="2.3"/><path d="M2.1 2.4L6.9 1.8L6.3 6.8z" fill="#1c9c1c"/><path d="M9 2.3A5.2 5.2 0 0 1 11.7 11.3" fill="none" stroke="#1c9c1c" stroke-width="2.3"/><path d="M13.8 13.6L9 14.2L9.600 9.200z" fill="#0c700c"/></svg>
<svg style="left:200px;top:109px" width="16" height="16" viewBox="0 0 16 16"><g transform="translate(0,-0.6)"><rect x="1" y="6" width="5.2" height="10" rx="0.5" fill="#2470d4"/><rect x="2.1" y="6.9" width="2.90" height="8.20" fill="url(#gwp)"/><rect x="2.1" y="7.2" width="2.90" height="0.950" fill="#eef0ff"/><rect x="2.1" y="9.2" width="2.90" height="0.950" fill="#eef0ff"/><rect x="2.1" y="11.1" width="2.90" height="0.950" fill="#eef0ff"/><rect x="2.1" y="13.1" width="2.90" height="0.950" fill="#eef0ff"/><rect x="3.00" y="14.600" width="1" height="1.400" fill="#3054d8"/><rect x="11" y="8.1" width="5" height="7.9" rx="0.5" fill="#2470d4"/><rect x="12.1" y="9.0" width="2.70" height="6.10" fill="url(#gwp)"/><rect x="12.1" y="9.2" width="2.70" height="0.950" fill="#eef0ff"/><rect x="12.1" y="11.1" width="2.70" height="0.950" fill="#eef0ff"/><rect x="12.1" y="13.1" width="2.70" height="0.950" fill="#eef0ff"/><rect x="12.90" y="14.600" width="1" height="1.400" fill="#3054d8"/><rect x="6" y="4.1" width="5.2" height="11.9" rx="0.5" fill="#1468d8"/><rect x="7.1" y="5.0" width="2.90" height="10.10" fill="url(#gwp)"/><rect x="7.1" y="5.2" width="2.90" height="0.950" fill="#eef0ff"/><rect x="7.1" y="7.2" width="2.90" height="0.950" fill="#eef0ff"/><rect x="7.1" y="9.2" width="2.90" height="0.950" fill="#eef0ff"/><rect x="7.1" y="11.1" width="2.90" height="0.950" fill="#eef0ff"/><rect x="7.1" y="13.1" width="2.90" height="0.950" fill="#eef0ff"/><rect x="8.00" y="14.600" width="1" height="1.400" fill="#3054d8"/><rect x="5.900" y="1" width="1" height="3.100" fill="#303030"/></g><rect x="8" y="0.3" width="7" height="7" rx="1" fill="#f58a1f"/><path d="M11.5 1.35L13.95 3.8L11.5 6.25L9.05 3.8z" fill="#fff"/><rect x="8.84" y="1.14" width="0.98" height="0.98" fill="#fff"/><rect x="8.84" y="5.48" width="0.98" height="0.98" fill="#fff"/><rect x="13.18" y="1.14" width="0.98" height="0.98" fill="#fff"/><rect x="13.18" y="5.48" width="0.98" height="0.98" fill="#fff"/><circle cx="11.5" cy="3.8" r="0.63" fill="#f58a1f"/></svg>
<svg style="left:223px;top:109px" width="16" height="16" viewBox="0 0 16 16"><rect x="0.5" y="2" width="6" height="1.3" fill="#d4d4d4"/><rect x="0.5" y="4" width="6" height="1.3" fill="#d4d4d4"/><rect x="0.5" y="6" width="6" height="1.3" fill="#d4d4d4"/><rect x="0.5" y="8" width="6" height="1.3" fill="#d4d4d4"/><rect x="0.5" y="10" width="6" height="1.3" fill="#d4d4d4"/><rect x="0.5" y="12" width="6" height="1.3" fill="#d4d4d4"/><rect x="0.3" y="1" width="6.4" height="13.5" fill="none" stroke="#b8b8b8" stroke-width="0.6"/><rect x="10" y="8" width="5.5" height="1.3" fill="#b0b0b0"/><rect x="10" y="10" width="5.5" height="1.3" fill="#b0b0b0"/><rect x="10" y="12" width="5.5" height="1.3" fill="#b0b0b0"/><rect x="9.8" y="7" width="6" height="7.5" fill="none" stroke="#a0a0a0" stroke-width="0.6"/><rect x="8.5" y="0.5" width="6.5" height="6.5" rx="1" fill="#828282"/><path d="M11.75 1.48L14.03 3.75L11.75 6.03L9.47 3.75z" fill="#fff"/><rect x="9.28" y="1.28" width="0.91" height="0.91" fill="#fff"/><rect x="9.28" y="5.31" width="0.91" height="0.91" fill="#fff"/><rect x="13.31" y="1.28" width="0.91" height="0.91" fill="#fff"/><rect x="13.31" y="5.31" width="0.91" height="0.91" fill="#fff"/><circle cx="11.75" cy="3.75" r="0.58" fill="#828282"/></svg>
<svg style="left:247px;top:109px" width="16" height="16" viewBox="0 0 16 16"><rect x="3" y="3" width="7" height="1.3" fill="#c8c8c8"/><rect x="3" y="5" width="7" height="1.3" fill="#c8c8c8"/><rect x="3" y="7" width="7" height="1.3" fill="#c8c8c8"/><rect x="3" y="9" width="7" height="1.3" fill="#c8c8c8"/><rect x="3" y="11" width="7" height="1.3" fill="#c8c8c8"/><rect x="3" y="13" width="7" height="1.3" fill="#c8c8c8"/><rect x="2.8" y="2" width="7.4" height="13" fill="none" stroke="#b0b0b0" stroke-width="0.6"/><rect x="8" y="0.5" width="6.5" height="6.5" rx="1" fill="#828282"/><path d="M11.25 1.48L13.53 3.75L11.25 6.03L8.97 3.75z" fill="#fff"/><rect x="8.78" y="1.28" width="0.91" height="0.91" fill="#fff"/><rect x="8.78" y="5.31" width="0.91" height="0.91" fill="#fff"/><rect x="12.81" y="1.28" width="0.91" height="0.91" fill="#fff"/><rect x="12.81" y="5.31" width="0.91" height="0.91" fill="#fff"/><circle cx="11.25" cy="3.75" r="0.58" fill="#828282"/></svg>
<svg style="left:269px;top:109px" width="16" height="16" viewBox="0 0 16 16"><path d="M12 7.8V0.6l0.9-0.6l0.5 1.4l0.7 0.3v3.100l1.900 1.700V7.800z" fill="url(#gpv)"/><path d="M6.900 7.900V3.600l1.600-0.400l0.900 1.200l1.400 1.800V7.900z" fill="url(#gpv)"/><rect x="1" y="2.600" width="2.900" height="13.200" fill="#808080"/><ellipse cx="2.450" cy="4.9" rx="0.650" ry="0.950" fill="#fff"/><ellipse cx="2.450" cy="8" rx="0.650" ry="0.950" fill="#fff"/><ellipse cx="2.450" cy="11" rx="0.650" ry="0.950" fill="#fff"/><ellipse cx="2.450" cy="14" rx="0.650" ry="0.950" fill="#fff"/><rect x="0" y="0.850" width="12.200" height="0.950" fill="#848484"/><rect x="1" y="15" width="4.800" height="0.800" fill="#808080"/><circle cx="2.400" cy="1.300" r="1.200" fill="#f0eaff" stroke="#9060f0" stroke-width="0.800"/><path d="M9.400 1.800L5.100 7.9M9.400 1.800L13.600 7.9" stroke="#701020" stroke-width="1.100" stroke-dasharray="1 0.400"/><rect x="3.900" y="7.9" width="11" height="2.800" fill="url(#gor)"/><rect x="6.900" y="10.700" width="4.100" height="5.300" fill="url(#gbl)"/><rect x="12" y="10.700" width="4" height="5.300" fill="url(#gbl)"/><circle cx="9.5" cy="12.5" r="0.550" fill="#e8f4ff"/><circle cx="9.5" cy="14.4" r="0.550" fill="#e8f4ff"/><circle cx="14.4" cy="12.5" r="0.550" fill="#e8f4ff"/><circle cx="14.4" cy="14.4" r="0.550" fill="#e8f4ff"/><path d="M6.9 11.9l0.900 0.600l-0.900 0.600z" fill="#fff"/><path d="M6.9 13.8l0.900 0.600l-0.900 0.600z" fill="#fff"/><path d="M12 11.9l0.900 0.600l-0.900 0.600z" fill="#fff"/><path d="M12 13.8l0.900 0.600l-0.900 0.600z" fill="#fff"/><rect x="8.3" y="0" width="7" height="7" rx="1" fill="#f58a1f"/><path d="M11.8 1.05L14.25 3.5L11.8 5.95L9.35 3.5z" fill="#fff"/><rect x="9.14" y="0.84" width="0.98" height="0.98" fill="#fff"/><rect x="9.14" y="5.18" width="0.98" height="0.98" fill="#fff"/><rect x="13.48" y="0.84" width="0.98" height="0.98" fill="#fff"/><rect x="13.48" y="5.18" width="0.98" height="0.98" fill="#fff"/><circle cx="11.8" cy="3.5" r="0.63" fill="#f58a1f"/></svg>
<svg style="left:292px;top:109px" width="16" height="16" viewBox="0 0 16 16"><path d="M12 7.8V0.6l0.9-0.6l0.5 1.4l0.7 0.3v3.100l1.900 1.700V7.800z" fill="url(#gpv)"/><path d="M6.900 7.900V3.600l1.600-0.400l0.900 1.200l1.400 1.800V7.900z" fill="url(#gpv)"/><rect x="1" y="2.600" width="2.900" height="13.200" fill="#808080"/><ellipse cx="2.450" cy="4.9" rx="0.650" ry="0.950" fill="#fff"/><ellipse cx="2.450" cy="8" rx="0.650" ry="0.950" fill="#fff"/><ellipse cx="2.450" cy="11" rx="0.650" ry="0.950" fill="#fff"/><ellipse cx="2.450" cy="14" rx="0.650" ry="0.950" fill="#fff"/><rect x="0" y="0.850" width="12.200" height="0.950" fill="#848484"/><rect x="1" y="15" width="4.800" height="0.800" fill="#808080"/><circle cx="2.400" cy="1.300" r="1.200" fill="#f0eaff" stroke="#9060f0" stroke-width="0.800"/><path d="M9.400 1.800L5.100 5.2M9.400 1.800L13.600 5.2" stroke="#701020" stroke-width="1.100" stroke-dasharray="1 0.400"/><rect x="3.900" y="5.2" width="11" height="2.800" fill="url(#gor)"/><rect x="6.900" y="10.700" width="4.100" height="5.300" fill="url(#gbl)"/><rect x="12" y="10.700" width="4" height="5.300" fill="url(#gbl)"/><circle cx="9.5" cy="12.5" r="0.550" fill="#e8f4ff"/><circle cx="9.5" cy="14.4" r="0.550" fill="#e8f4ff"/><circle cx="14.4" cy="12.5" r="0.550" fill="#e8f4ff"/><circle cx="14.4" cy="14.4" r="0.550" fill="#e8f4ff"/><path d="M6.9 11.9l0.900 0.600l-0.900 0.600z" fill="#fff"/><path d="M6.9 13.8l0.900 0.600l-0.900 0.600z" fill="#fff"/><path d="M12 11.9l0.900 0.600l-0.900 0.600z" fill="#fff"/><path d="M12 13.8l0.900 0.600l-0.900 0.600z" fill="#fff"/><rect x="5.5" y="8" width="7" height="3.800" rx="0.800" fill="url(#grl)"/><path d="M12.5 9.9h0.900v2.800l-4 0.800" stroke="#101010" stroke-width="1" fill="none"/><circle cx="8.5" cy="14.4" r="1.200" fill="#e81010"/><rect x="8.3" y="0" width="7" height="7" rx="1" fill="#f58a1f"/><path d="M11.8 1.05L14.25 3.5L11.8 5.95L9.35 3.5z" fill="#fff"/><rect x="9.14" y="0.84" width="0.98" height="0.98" fill="#fff"/><rect x="9.14" y="5.18" width="0.98" height="0.98" fill="#fff"/><rect x="13.48" y="0.84" width="0.98" height="0.98" fill="#fff"/><rect x="13.48" y="5.18" width="0.98" height="0.98" fill="#fff"/><circle cx="11.8" cy="3.5" r="0.63" fill="#f58a1f"/></svg>
<svg style="left:315px;top:109px" width="16" height="16" viewBox="0 0 16 16"><path d="M-0.3 7.7L10.5 13L15.9 6V9L10.7 15.9L-0.3 10.5z" fill="#e8eef6" stroke="#a8b8c8" stroke-width="0.5"/><path d="M5.2 0.1L15.9 6L10.5 13L-0.3 7.7z" fill="#2c9464"/><path d="M6 2.2l2.300 1.300" stroke="#b8e8d0" stroke-width="1.300" stroke-linecap="round"/><rect x="9" y="1" width="7" height="7" rx="1" fill="#f58a1f"/><path d="M12.5 2.05L14.95 4.5L12.5 6.95L10.05 4.5z" fill="#fff"/><rect x="9.84" y="1.84" width="0.98" height="0.98" fill="#fff"/><rect x="9.84" y="6.18" width="0.98" height="0.98" fill="#fff"/><rect x="14.18" y="1.84" width="0.98" height="0.98" fill="#fff"/><rect x="14.18" y="6.18" width="0.98" height="0.98" fill="#fff"/><circle cx="12.5" cy="4.5" r="0.63" fill="#f58a1f"/></svg>
<svg style="left:338px;top:109px" width="16" height="16" viewBox="0 0 16 16"><path d="M-0.3 7.7L10.5 13L15.9 6V9L10.7 15.9L-0.3 10.5z" fill="#eef2f8" stroke="#b8c4d0" stroke-width="0.5"/><path d="M5.2 0.1L15.9 6L10.5 13L-0.3 7.7z" fill="#58b088"/><path d="M6 2.2l2.300 1.300" stroke="#d0f0e0" stroke-width="1.300" stroke-linecap="round"/><rect x="3.8" y="8" width="7" height="3.800" rx="0.800" fill="url(#grl)"/><path d="M10.8 9.9h0.900v2.800l-4 0.800" stroke="#101010" stroke-width="1" fill="none"/><circle cx="6.8" cy="14.4" r="1.200" fill="#e81010"/><rect x="9" y="1" width="7" height="7" rx="1" fill="#f58a1f"/><path d="M12.5 2.05L14.95 4.5L12.5 6.95L10.05 4.5z" fill="#fff"/><rect x="9.84" y="1.84" width="0.98" height="0.98" fill="#fff"/><rect x="9.84" y="6.18" width="0.98" height="0.98" fill="#fff"/><rect x="14.18" y="1.84" width="0.98" height="0.98" fill="#fff"/><rect x="14.18" y="6.18" width="0.98" height="0.98" fill="#fff"/><circle cx="12.5" cy="4.5" r="0.63" fill="#f58a1f"/></svg>
<svg style="left:367px;top:109px" width="16" height="16" viewBox="0 0 16 16"><rect x="3.2" y="1" width="2.3" height="6" fill="#f4a820" stroke="#a86020" stroke-width="0.6"/><rect x="11" y="4" width="2.4" height="4.5" fill="#f4a820" stroke="#a86020" stroke-width="0.6"/><path d="M2.7 9.3L8 3.6l5.3 5.7v6.2h-10.6z" fill="#fff"/><path d="M2.7 9v6.5M13.3 9v6.5" stroke="#9a9a9a" stroke-width="0.9"/><path d="M1 15.5h14" stroke="#8c8c8c" stroke-width="0.9"/><path d="M1 9.8L8 2.6l7 7.2" fill="none" stroke="#c4702c" stroke-width="1.2"/><rect x="4.2" y="10.5" width="2.4" height="5" fill="#ffc028" stroke="#a86020" stroke-width="0.6"/><rect x="8.6" y="10" width="2.6" height="3.4" fill="#5c98ec"/><path d="M9.9 10v3.4" stroke="#a8c8ff" stroke-width="0.5"/><rect x="8.5" y="0.3" width="7" height="7" rx="1" fill="#f58a1f"/><path d="M12.0 1.35L14.45 3.8L12.0 6.25L9.55 3.8z" fill="#fff"/><rect x="9.34" y="1.14" width="0.98" height="0.98" fill="#fff"/><rect x="9.34" y="5.48" width="0.98" height="0.98" fill="#fff"/><rect x="13.68" y="1.14" width="0.98" height="0.98" fill="#fff"/><rect x="13.68" y="5.48" width="0.98" height="0.98" fill="#fff"/><circle cx="12.0" cy="3.8" r="0.63" fill="#f58a1f"/></svg>
<svg style="left:390px;top:109px" width="16" height="16" viewBox="0 0 16 16"><rect x="3.2" y="1" width="2.3" height="6" fill="#f4a820" stroke="#a86020" stroke-width="0.6"/><rect x="11" y="4" width="2.4" height="4.5" fill="#f4a820" stroke="#a86020" stroke-width="0.6"/><path d="M2.7 9.3L8 3.6l5.3 5.7v6.2h-10.6z" fill="#fff"/><path d="M2.7 9v6.5M13.3 9v6.5" stroke="#9a9a9a" stroke-width="0.9"/><path d="M1 15.5h14" stroke="#8c8c8c" stroke-width="0.9"/><path d="M1 9.8L8 2.6l7 7.2" fill="none" stroke="#c4702c" stroke-width="1.2"/><rect x="4" y="8" width="7" height="3.800" rx="0.800" fill="url(#grl)"/><path d="M11 9.9h0.900v2.800l-4 0.800" stroke="#101010" stroke-width="1" fill="none"/><circle cx="7" cy="14.4" r="1.200" fill="#e81010"/><rect x="8.5" y="0.3" width="7" height="7" rx="1" fill="#f58a1f"/><path d="M12.0 1.35L14.45 3.8L12.0 6.25L9.55 3.8z" fill="#fff"/><rect x="9.34" y="1.14" width="0.98" height="0.98" fill="#fff"/><rect x="9.34" y="5.48" width="0.98" height="0.98" fill="#fff"/><rect x="13.68" y="1.14" width="0.98" height="0.98" fill="#fff"/><rect x="13.68" y="5.48" width="0.98" height="0.98" fill="#fff"/><circle cx="12.0" cy="3.8" r="0.63" fill="#f58a1f"/></svg>
<svg style="left:419px;top:109px" width="16" height="16" viewBox="0 0 16 16"><rect x="0.5" y="1.5" width="15" height="13.5" fill="#fff" stroke="#c4c4c4" stroke-width="1"/><rect x="0" y="0" width="6.6" height="6.6" rx="1" fill="#828282"/><path d="M3.3 0.99L5.61 3.3L3.3 5.61L0.99 3.3z" fill="#fff"/><rect x="0.79" y="0.79" width="0.92" height="0.92" fill="#fff"/><rect x="0.79" y="4.88" width="0.92" height="0.92" fill="#fff"/><rect x="4.88" y="0.79" width="0.92" height="0.92" fill="#fff"/><rect x="4.88" y="4.88" width="0.92" height="0.92" fill="#fff"/><circle cx="3.3" cy="3.3" r="0.59" fill="#828282"/><text x="6.9" y="12.9" font-family="Liberation Sans,sans-serif" font-size="7.2" fill="#000">Р</text></svg>
<svg style="left:442px;top:109px" width="16" height="16" viewBox="0 0 16 16"><rect x="0.5" y="1.5" width="15" height="13.5" fill="#fff" stroke="#c4c4c4" stroke-width="1"/><rect x="0" y="0" width="6.6" height="6.6" rx="1" fill="#828282"/><path d="M3.3 0.99L5.61 3.3L3.3 5.61L0.99 3.3z" fill="#fff"/><rect x="0.79" y="0.79" width="0.92" height="0.92" fill="#fff"/><rect x="0.79" y="4.88" width="0.92" height="0.92" fill="#fff"/><rect x="4.88" y="0.79" width="0.92" height="0.92" fill="#fff"/><rect x="4.88" y="4.88" width="0.92" height="0.92" fill="#fff"/><circle cx="3.3" cy="3.3" r="0.59" fill="#828282"/><text x="2.8" y="12.9" font-family="Liberation Sans,sans-serif" font-size="7.2" fill="#000" textLength="11" lengthAdjust="spacingAndGlyphs">ПР</text></svg>
<svg style="left:465px;top:109px" width="16" height="16" viewBox="0 0 16 16"><path d="M8 1.8l5.3 5.8h-3.3v6.8h-4v-6.8h-3.3z" fill="#a4a4a4"/></svg>
<svg style="left:488px;top:109px" width="16" height="16" viewBox="0 0 16 16"><path d="M8 14.4l5.3-5.8h-3.3v-6.8h-4v6.8h-3.3z" fill="#a4a4a4"/></svg>
<svg style="left:517px;top:109px" width="16" height="16" viewBox="0 0 16 16"><path d="M4.5 5.75L8.0 1.6l3.5 4.15v4.05h-7z" fill="#fff" stroke="#b8b8b8" stroke-width="0.5"/><path d="M3.5 6.38L8.0 0.8l4.5 5.58" fill="none" stroke="#a04010" stroke-width="1.3"/><rect x="8.3" y="6" width="2.2" height="2.2" fill="#78b4f8"/><rect x="5.8" y="6.3" width="1.3" height="2.6" fill="#e0a050"/><path d="M1 12.18L3.8 8.8l2.8 3.38v3.42h-5.6z" fill="#fff" stroke="#b8b8b8" stroke-width="0.5"/><path d="M0 12.712L3.8 8l3.8 4.712" fill="none" stroke="#a04010" stroke-width="1.3"/><path d="M9.4 12.18L12.2 8.8l2.8 3.38v3.42h-5.6z" fill="#fff" stroke="#b8b8b8" stroke-width="0.5"/><path d="M8.4 12.712L12.2 8l3.8 4.712" fill="none" stroke="#a04010" stroke-width="1.3"/><rect x="3" y="12.6" width="1.5" height="2.8" fill="#e8a030"/><rect x="11.4" y="12.6" width="1.5" height="2.8" fill="#e8a030"/><path d="M5 0.3v2.4" stroke="#a04010" stroke-width="1.1"/></svg>
<svg style="left:540px;top:109px" width="16" height="16" viewBox="0 0 16 16"><rect x="2.5" y="1.5" width="13" height="11.5" fill="#58b8a4" stroke="#38907c" stroke-width="0.6"/><rect x="0.5" y="3.5" width="13" height="11.5" fill="url(#gte)" stroke="#2c8470" stroke-width="0.8"/><text x="2.2" y="10" font-family="Liberation Sans,sans-serif" font-size="7" font-weight="bold" fill="#fff">0|</text><text x="5.4" y="14.2" font-family="Liberation Sans,sans-serif" font-size="7" font-weight="bold" fill="#fff">|0</text><rect x="9" y="0" width="7" height="7" rx="1" fill="#f58a1f"/><path d="M12.5 1.05L14.95 3.5L12.5 5.95L10.05 3.5z" fill="#fff"/><rect x="9.84" y="0.84" width="0.98" height="0.98" fill="#fff"/><rect x="9.84" y="5.18" width="0.98" height="0.98" fill="#fff"/><rect x="14.18" y="0.84" width="0.98" height="0.98" fill="#fff"/><rect x="14.18" y="5.18" width="0.98" height="0.98" fill="#fff"/><circle cx="12.5" cy="3.5" r="0.63" fill="#f58a1f"/></svg>
<svg style="left:569px;top:109px" width="16" height="16" viewBox="0 0 16 16"><rect x="0.5" y="1" width="15" height="13.5" fill="url(#gtl)"/><path d="M0.5 1V14.5H15.5V5" fill="none" stroke="#a4a4a4" stroke-width="1"/><text x="3" y="13.4" font-family="Liberation Sans,sans-serif" font-size="12.5" fill="#000" textLength="10.5" lengthAdjust="spacingAndGlyphs">%</text><rect x="9.3" y="-0.3" width="6.8" height="6.8" rx="1" fill="#f58a1f"/><path d="M12.700000000000001 0.72L15.08 3.1L12.700000000000001 5.48L10.32 3.1z" fill="#fff"/><rect x="10.12" y="0.52" width="0.95" height="0.95" fill="#fff"/><rect x="10.12" y="4.73" width="0.95" height="0.95" fill="#fff"/><rect x="14.33" y="0.52" width="0.95" height="0.95" fill="#fff"/><rect x="14.33" y="4.73" width="0.95" height="0.95" fill="#fff"/><circle cx="12.700000000000001" cy="3.1" r="0.61" fill="#f58a1f"/></svg>
<svg style="left:592px;top:109px" width="16" height="16" viewBox="0 0 16 16"><rect x="0.5" y="1" width="15" height="13.5" fill="url(#gtl)"/><path d="M0.5 1V14.5H15.5V5" fill="none" stroke="#a4a4a4" stroke-width="1"/><text x="1" y="13.4" font-family="Liberation Sans,sans-serif" font-size="10.5" fill="#000" textLength="14.5" lengthAdjust="spacingAndGlyphs">М29</text><rect x="9.3" y="-0.3" width="6.8" height="6.8" rx="1" fill="#f58a1f"/><path d="M12.700000000000001 0.72L15.08 3.1L12.700000000000001 5.48L10.32 3.1z" fill="#fff"/><rect x="10.12" y="0.52" width="0.95" height="0.95" fill="#fff"/><rect x="10.12" y="4.73" width="0.95" height="0.95" fill="#fff"/><rect x="14.33" y="0.52" width="0.95" height="0.95" fill="#fff"/><rect x="14.33" y="4.73" width="0.95" height="0.95" fill="#fff"/><circle cx="12.700000000000001" cy="3.1" r="0.61" fill="#f58a1f"/></svg>
<svg style="left:615px;top:109px" width="16" height="16" viewBox="0 0 16 16"><rect x="0.5" y="1" width="15" height="13.5" fill="url(#gtb)"/><path d="M0.5 1V14.5H15.5V5" fill="none" stroke="#a4a4a4" stroke-width="1"/><text x="2.5" y="13.4" font-family="Liberation Sans,sans-serif" font-size="10.5" fill="#000" textLength="10" lengthAdjust="spacingAndGlyphs">РР</text><rect x="9.3" y="-0.3" width="6.8" height="6.8" rx="1" fill="#f58a1f"/><path d="M12.700000000000001 0.72L15.08 3.1L12.700000000000001 5.48L10.32 3.1z" fill="#fff"/><rect x="10.12" y="0.52" width="0.95" height="0.95" fill="#fff"/><rect x="10.12" y="4.73" width="0.95" height="0.95" fill="#fff"/><rect x="14.33" y="0.52" width="0.95" height="0.95" fill="#fff"/><rect x="14.33" y="4.73" width="0.95" height="0.95" fill="#fff"/><circle cx="12.700000000000001" cy="3.1" r="0.61" fill="#f58a1f"/></svg>
<svg style="left:638px;top:109px" width="16" height="16" viewBox="0 0 16 16"><rect x="0.5" y="1" width="15" height="13.5" fill="url(#gtl)"/><path d="M0.5 1V14.5H15.5V5" fill="none" stroke="#a4a4a4" stroke-width="1"/><text x="1.5" y="13.4" font-family="Liberation Sans,sans-serif" font-size="10.5" fill="#000" textLength="12" lengthAdjust="spacingAndGlyphs">Ф3</text><rect x="9.3" y="-0.3" width="6.8" height="6.8" rx="1" fill="#f58a1f"/><path d="M12.700000000000001 0.72L15.08 3.1L12.700000000000001 5.48L10.32 3.1z" fill="#fff"/><rect x="10.12" y="0.52" width="0.95" height="0.95" fill="#fff"/><rect x="10.12" y="4.73" width="0.95" height="0.95" fill="#fff"/><rect x="14.33" y="0.52" width="0.95" height="0.95" fill="#fff"/><rect x="14.33" y="4.73" width="0.95" height="0.95" fill="#fff"/><circle cx="12.700000000000001" cy="3.1" r="0.61" fill="#f58a1f"/></svg>
<svg style="left:667px;top:109px" width="16" height="16" viewBox="0 0 16 16"><path d="M0.5 3h6l1.5 1.8h7.5v10h-15z" fill="#b0b0b0" stroke="#a0a0a0" stroke-width="0.6"/><rect x="9" y="0.3" width="7" height="7" rx="1" fill="#828282"/><path d="M12.5 1.35L14.95 3.8L12.5 6.25L10.05 3.8z" fill="#fff"/><rect x="9.84" y="1.14" width="0.98" height="0.98" fill="#fff"/><rect x="9.84" y="5.48" width="0.98" height="0.98" fill="#fff"/><rect x="14.18" y="1.14" width="0.98" height="0.98" fill="#fff"/><rect x="14.18" y="5.48" width="0.98" height="0.98" fill="#fff"/><circle cx="12.5" cy="3.8" r="0.63" fill="#828282"/></svg>
<svg style="left:696px;top:109px" width="16" height="16" viewBox="0 0 16 16"><path d="M3 2.8L13 13.2M13.2 2.8L3 13.2" stroke="#f04828" stroke-width="1.7" fill="none"/></svg>
</div>
<div class="g" id="left-pane">
<div class="a" style="left:62px;top:131px;width:1px;height:20px;background:#a0a0a0;"></div>
<div class="a" style="left:63px;top:131px;width:1px;height:20px;background:#696969;"></div>
<div class="a" style="left:64px;top:151px;width:394px;height:1px;background:#fff;"></div>
<span class="t" style="left:5.40px;top:132px;font-size:11px;color:#000;letter-spacing:-0.123px;">Структура</span>
<div class="a" style="left:1px;top:154px;width:456px;height:935px;background:#fff;box-sizing:border-box;border-top:2px solid #696969;border-left:2px solid #696969;border-right:1px solid #e3e3e3;border-bottom:1px solid #e3e3e3;"></div>
<div class="a" style="left:1px;top:153px;width:457px;height:1px;background:#a0a0a0;"></div>
<div class="a" style="left:458px;top:150px;width:1px;height:943px;background:#a0a0a0;"></div>
<div class="a" style="left:459px;top:150px;width:1px;height:943px;background:#696969;"></div>
<div class="a" style="left:1px;top:1091px;width:1748px;height:1px;background:#696969;"></div>
<div class="a" style="left:1px;top:1092px;width:1748px;height:1px;background:#808080;"></div>
<div class="a" style="left:1px;top:1093px;width:1748px;height:1px;background:#fff;"></div>
</div>
<div class="g" id="right-pane">
<div class="a" style="left:464px;top:132px;width:1px;height:959px;background:#fff;"></div>
<div class="a" style="left:464px;top:152px;width:1283px;height:1px;background:#fff;"></div>
<div class="a" style="left:1746px;top:153px;width:1px;height:938px;background:#a0a0a0;"></div>
<div class="a" style="left:1747px;top:152px;width:1px;height:940px;background:#696969;"></div>
<div class="a" style="left:1748px;top:131px;width:1px;height:961px;background:#696969;"></div>
<div class="a" style="left:468px;top:134px;width:71px;height:1px;background:#fff;"></div>
<div class="a" style="left:467px;top:135px;width:1px;height:17px;background:#fff;"></div>
<div class="a" style="left:539px;top:135px;width:1px;height:17px;background:#a0a0a0;"></div>
<div class="a" style="left:540px;top:135px;width:1px;height:17px;background:#696969;"></div>
<span class="t" style="left:472.10px;top:135px;font-size:11px;color:#000;letter-spacing:-0.122px;">Содержание</span>
<div class="a" style="left:543px;top:134px;width:67px;height:1px;background:#fff;"></div>
<div class="a" style="left:542px;top:135px;width:1px;height:17px;background:#fff;"></div>
<div class="a" style="left:610px;top:135px;width:1px;height:17px;background:#a0a0a0;"></div>
<div class="a" style="left:611px;top:135px;width:1px;height:17px;background:#696969;"></div>
<span class="t" style="left:547.10px;top:135px;font-size:11px;color:#000;letter-spacing:0.120px;">Параметры</span>
<div class="a" style="left:614px;top:134px;width:99px;height:1px;background:#fff;"></div>
<div class="a" style="left:613px;top:135px;width:1px;height:17px;background:#fff;"></div>
<div class="a" style="left:713px;top:135px;width:1px;height:17px;background:#a0a0a0;"></div>
<div class="a" style="left:714px;top:135px;width:1px;height:17px;background:#696969;"></div>
<span class="t" style="left:618.10px;top:135px;font-size:11px;color:#000;letter-spacing:0.120px;">Объектная смета</span>
<div class="a" style="left:777px;top:134px;width:38px;height:1px;background:#fff;"></div>
<div class="a" style="left:776px;top:135px;width:1px;height:17px;background:#fff;"></div>
<div class="a" style="left:815px;top:135px;width:1px;height:17px;background:#a0a0a0;"></div>
<div class="a" style="left:816px;top:135px;width:1px;height:17px;background:#696969;"></div>
<span class="t" style="left:779.10px;top:135px;font-size:11px;color:#000;letter-spacing:0.181px;">НМЦК</span>
<div class="a" style="left:819px;top:134px;width:38px;height:1px;background:#fff;"></div>
<div class="a" style="left:818px;top:135px;width:1px;height:17px;background:#fff;"></div>
<div class="a" style="left:857px;top:135px;width:1px;height:17px;background:#a0a0a0;"></div>
<div class="a" style="left:858px;top:135px;width:1px;height:17px;background:#696969;"></div>
<span class="t" style="left:823.10px;top:135px;font-size:11px;color:#000;letter-spacing:-0.137px;">ВОР</span>
<div class="a" style="left:861px;top:134px;width:193px;height:1px;background:#fff;"></div>
<div class="a" style="left:860px;top:135px;width:1px;height:17px;background:#fff;"></div>
<div class="a" style="left:1054px;top:135px;width:1px;height:17px;background:#a0a0a0;"></div>
<div class="a" style="left:1055px;top:135px;width:1px;height:17px;background:#696969;"></div>
<span class="t" style="left:865.10px;top:135px;font-size:11px;color:#000;letter-spacing:-0.028px;">Исполнение Сметы контракта (ЕИС)</span>
<div class="a" style="left:713px;top:132px;width:61px;height:21px;background:#f0f0f0;"></div>
<div class="a" style="left:714px;top:132px;width:59px;height:1px;background:#fff;"></div>
<div class="a" style="left:713px;top:133px;width:1px;height:19px;background:#fff;"></div>
<div class="a" style="left:773px;top:133px;width:1px;height:20px;background:#a0a0a0;"></div>
<div class="a" style="left:774px;top:133px;width:1px;height:20px;background:#696969;"></div>
<span class="t" style="left:720.30px;top:133px;font-size:11px;color:#000;letter-spacing:-0.422px;">ССР и СЗ</span>
<span class="t" style="left:965.20px;top:614px;font-size:11px;color:#000;font-weight:bold;letter-spacing:0.542px;">Сводный сметный расчет доступен на проекте</span>
</div>
<div class="g" id="statusbar">
<div class="a" style="left:2px;top:1096px;width:83px;height:26px;box-sizing:border-box;border-top:1px solid #a0a0a0;border-left:1px solid #a0a0a0;border-right:1px solid #fff;border-bottom:1px solid #fff;"></div>
<div class="a" style="left:86px;top:1095px;width:1px;height:28px;background:#a0a0a0;"></div>
<div class="a" style="left:87px;top:1095px;width:1px;height:28px;background:#fff;"></div>
<div class="a" style="left:89px;top:1096px;width:296px;height:26px;box-sizing:border-box;border-top:1px solid #a0a0a0;border-left:1px solid #a0a0a0;border-right:1px solid #fff;border-bottom:1px solid #fff;"></div>
<div class="a" style="left:386px;top:1095px;width:1px;height:28px;background:#a0a0a0;"></div>
<div class="a" style="left:387px;top:1095px;width:1px;height:28px;background:#fff;"></div>
<div class="a" style="left:389px;top:1096px;width:1289px;height:26px;box-sizing:border-box;border-top:1px solid #a0a0a0;border-left:1px solid #a0a0a0;border-right:1px solid #fff;border-bottom:1px solid #fff;"></div>
<div class="a" style="left:1679px;top:1095px;width:1px;height:28px;background:#a0a0a0;"></div>
<div class="a" style="left:1680px;top:1095px;width:1px;height:28px;background:#fff;"></div>
<div class="a" style="left:1682px;top:1096px;width:30px;height:26px;box-sizing:border-box;border-top:1px solid #a0a0a0;border-left:1px solid #a0a0a0;border-right:1px solid #fff;border-bottom:1px solid #fff;"></div>
<div class="a" style="left:1713px;top:1095px;width:1px;height:28px;background:#a0a0a0;"></div>
<div class="a" style="left:1714px;top:1095px;width:1px;height:28px;background:#fff;"></div>
<div class="a" style="left:1716px;top:1096px;width:31px;height:26px;box-sizing:border-box;border-top:1px solid #a0a0a0;border-left:1px solid #a0a0a0;border-right:1px solid #fff;border-bottom:1px solid #fff;"></div>
<div class="a" style="left:0px;top:1123px;width:1750px;height:2px;background:#808080;"></div>
<svg style="left:1689px;top:1101px" width="16" height="16" viewBox="0 0 16 16"><circle cx="8" cy="8" r="8" fill="#0078d7"/><rect x="7" y="6.5" width="2" height="6" fill="#fff"/><circle cx="8" cy="4.2" r="1.2" fill="#fff"/></svg>
<span class="t" style="left:1723.20px;top:1101px;font-size:12px;color:#000;letter-spacing:0.000px;transform:scaleX(0.82);transform-origin:0 0;">RU</span>
<div class="a" style="left:1747px;top:1094px;width:1px;height:29px;background:#a0a0a0;"></div>
</div>
<div class="g" id="project-tree">
<div class="a" style="left:30px;top:172px;width:1px;height:265px;background-image:linear-gradient(180deg,#808080 50%,transparent 50%);background-size:1px 2px;"></div>
<div class="a" style="left:49px;top:188px;width:1px;height:105px;background-image:linear-gradient(180deg,#808080 50%,transparent 50%);background-size:1px 2px;"></div>
<div class="a" style="left:68px;top:300px;width:1px;height:89px;background-image:linear-gradient(180deg,#808080 50%,transparent 50%);background-size:1px 2px;"></div>
<div class="a" style="left:17px;top:164px;width:5px;height:1px;background-image:linear-gradient(90deg,#808080 50%,transparent 50%);background-size:2px 1px;"></div>
<div class="a" style="left:7px;top:160px;width:9px;height:9px;background:#fff;box-sizing:border-box;border:1px solid #808080;"></div>
<div class="a" style="left:9px;top:164px;width:5px;height:1px;background:#000;"></div>
<svg style="left:22px;top:156px" width="16" height="16" viewBox="0 0 16 16"><path d="M5.5 1.8L0.2 13.8h10.6z" fill="#2c70d0"/><path d="M5.5 4l-3.6 8.8" stroke="#5c98e8" stroke-width="0.8"/><rect x="8.8" y="7" width="6.4" height="6.8" fill="#70c030" stroke="#58a020" stroke-width="0.6"/><circle cx="7" cy="11" r="3.7" fill="url(#grs)"/></svg>
<span class="t" style="left:43.40px;top:156px;font-size:11px;color:#000;letter-spacing:0.127px;">Проекты</span>
<div class="a" style="left:36px;top:180px;width:5px;height:1px;background-image:linear-gradient(90deg,#808080 50%,transparent 50%);background-size:2px 1px;"></div>
<div class="a" style="left:26px;top:176px;width:9px;height:9px;background:#fff;box-sizing:border-box;border:1px solid #808080;"></div>
<div class="a" style="left:28px;top:180px;width:5px;height:1px;background:#000;"></div>
<svg style="left:41px;top:172px" width="16" height="16" viewBox="0 0 16 16"><path d="M0.5 1.2h7l0.8 2h7.2v11.5h-15z" fill="#b0b8d0"/><rect x="1.2" y="1.8" width="5.8" height="1.4" fill="#ffd040"/><rect x="1.2" y="3.7" width="13.6" height="10.3" fill="url(#gy)"/></svg>
<span class="t" style="left:62.40px;top:172px;font-size:11px;color:#000;letter-spacing:0.077px;">Новая папка</span>
<span class="t" style="left:134.70px;top:172px;font-size:11px;color:#0000ff;letter-spacing:-0.120px;">[30]</span>
<div class="a" style="left:51px;top:196px;width:9px;height:1px;background-image:linear-gradient(90deg,#808080 50%,transparent 50%);background-size:2px 1px;"></div>
<svg style="left:60px;top:188px" width="16" height="16" viewBox="0 0 16 16"><path d="M12 7.8V0.6l0.9-0.6l0.5 1.4l0.7 0.3v3.100l1.900 1.700V7.800z" fill="url(#gpv)"/><path d="M6.900 7.900V3.600l1.600-0.400l0.900 1.200l1.400 1.800V7.900z" fill="url(#gpv)"/><rect x="1" y="2.600" width="2.900" height="13.200" fill="#808080"/><ellipse cx="2.450" cy="4.9" rx="0.650" ry="0.950" fill="#fff"/><ellipse cx="2.450" cy="8" rx="0.650" ry="0.950" fill="#fff"/><ellipse cx="2.450" cy="11" rx="0.650" ry="0.950" fill="#fff"/><ellipse cx="2.450" cy="14" rx="0.650" ry="0.950" fill="#fff"/><rect x="0" y="0.850" width="12.200" height="0.950" fill="#848484"/><rect x="1" y="15" width="4.800" height="0.800" fill="#808080"/><circle cx="2.400" cy="1.300" r="1.200" fill="#f0eaff" stroke="#9060f0" stroke-width="0.800"/><path d="M9.400 1.800L5.100 7.9M9.400 1.800L13.600 7.9" stroke="#701020" stroke-width="1.100" stroke-dasharray="1 0.400"/><rect x="3.900" y="7.9" width="11" height="2.800" fill="url(#gor)"/><rect x="6.900" y="10.700" width="4.100" height="5.300" fill="url(#gbl)"/><rect x="12" y="10.700" width="4" height="5.300" fill="url(#gbl)"/><circle cx="9.5" cy="12.5" r="0.550" fill="#e8f4ff"/><circle cx="9.5" cy="14.4" r="0.550" fill="#e8f4ff"/><circle cx="14.4" cy="12.5" r="0.550" fill="#e8f4ff"/><circle cx="14.4" cy="14.4" r="0.550" fill="#e8f4ff"/><path d="M6.9 11.9l0.900 0.600l-0.900 0.600z" fill="#fff"/><path d="M6.9 13.8l0.900 0.600l-0.900 0.600z" fill="#fff"/><path d="M12 11.9l0.900 0.600l-0.900 0.600z" fill="#fff"/><path d="M12 13.8l0.900 0.600l-0.900 0.600z" fill="#fff"/></svg>
<span class="t" style="left:81.40px;top:188px;font-size:11px;color:#000;letter-spacing:0.068px;">Новый объект строительства</span>
<span class="t" style="left:239.30px;top:188px;font-size:11px;color:#0000ff;letter-spacing:0.083px;">[0]</span>
<div class="a" style="left:55px;top:212px;width:5px;height:1px;background-image:linear-gradient(90deg,#808080 50%,transparent 50%);background-size:2px 1px;"></div>
<div class="a" style="left:45px;top:208px;width:9px;height:9px;background:#fff;box-sizing:border-box;border:1px solid #808080;"></div>
<div class="a" style="left:47px;top:212px;width:5px;height:1px;background:#000;"></div>
<div class="a" style="left:49px;top:210px;width:1px;height:5px;background:#000;"></div>
<svg style="left:60px;top:204px" width="16" height="16" viewBox="0 0 16 16"><rect x="1" y="6" width="5.2" height="10" rx="0.5" fill="#2470d4"/><rect x="2.1" y="6.9" width="2.90" height="8.20" fill="url(#gwp)"/><rect x="2.1" y="7.2" width="2.90" height="0.950" fill="#eef0ff"/><rect x="2.1" y="9.2" width="2.90" height="0.950" fill="#eef0ff"/><rect x="2.1" y="11.1" width="2.90" height="0.950" fill="#eef0ff"/><rect x="2.1" y="13.1" width="2.90" height="0.950" fill="#eef0ff"/><rect x="3.00" y="14.600" width="1" height="1.400" fill="#3054d8"/><rect x="11" y="8.1" width="5" height="7.9" rx="0.5" fill="#2470d4"/><rect x="12.1" y="9.0" width="2.70" height="6.10" fill="url(#gwp)"/><rect x="12.1" y="9.2" width="2.70" height="0.950" fill="#eef0ff"/><rect x="12.1" y="11.1" width="2.70" height="0.950" fill="#eef0ff"/><rect x="12.1" y="13.1" width="2.70" height="0.950" fill="#eef0ff"/><rect x="12.90" y="14.600" width="1" height="1.400" fill="#3054d8"/><rect x="6" y="4.1" width="5.2" height="11.9" rx="0.5" fill="#1468d8"/><rect x="7.1" y="5.0" width="2.90" height="10.10" fill="url(#gwp)"/><rect x="7.1" y="5.2" width="2.90" height="0.950" fill="#eef0ff"/><rect x="7.1" y="7.2" width="2.90" height="0.950" fill="#eef0ff"/><rect x="7.1" y="9.2" width="2.90" height="0.950" fill="#eef0ff"/><rect x="7.1" y="11.1" width="2.90" height="0.950" fill="#eef0ff"/><rect x="7.1" y="13.1" width="2.90" height="0.950" fill="#eef0ff"/><rect x="8.00" y="14.600" width="1" height="1.400" fill="#3054d8"/><rect x="5.900" y="1" width="1" height="3.100" fill="#303030"/><path d="M6.900 1C8.500 0.600 9.500 1 10 1.800L11.200 2.400V3H6.900z" fill="#e80000"/></svg>
<span class="t" style="left:81.40px;top:204px;font-size:11px;color:#000;letter-spacing:0.133px;">Проект</span>
<span class="t" style="left:125.30px;top:204px;font-size:11px;color:#0000ff;letter-spacing:0.014px;">[24]</span>
<div class="a" style="left:55px;top:228px;width:5px;height:1px;background-image:linear-gradient(90deg,#808080 50%,transparent 50%);background-size:2px 1px;"></div>
<div class="a" style="left:45px;top:224px;width:9px;height:9px;background:#fff;box-sizing:border-box;border:1px solid #808080;"></div>
<div class="a" style="left:47px;top:228px;width:5px;height:1px;background:#000;"></div>
<div class="a" style="left:49px;top:226px;width:1px;height:5px;background:#000;"></div>
<svg style="left:60px;top:220px" width="16" height="16" viewBox="0 0 16 16"><rect x="1" y="6" width="5.2" height="10" rx="0.5" fill="#2470d4"/><rect x="2.1" y="6.9" width="2.90" height="8.20" fill="url(#gwp)"/><rect x="2.1" y="7.2" width="2.90" height="0.950" fill="#eef0ff"/><rect x="2.1" y="9.2" width="2.90" height="0.950" fill="#eef0ff"/><rect x="2.1" y="11.1" width="2.90" height="0.950" fill="#eef0ff"/><rect x="2.1" y="13.1" width="2.90" height="0.950" fill="#eef0ff"/><rect x="3.00" y="14.600" width="1" height="1.400" fill="#3054d8"/><rect x="11" y="8.1" width="5" height="7.9" rx="0.5" fill="#2470d4"/><rect x="12.1" y="9.0" width="2.70" height="6.10" fill="url(#gwp)"/><rect x="12.1" y="9.2" width="2.70" height="0.950" fill="#eef0ff"/><rect x="12.1" y="11.1" width="2.70" height="0.950" fill="#eef0ff"/><rect x="12.1" y="13.1" width="2.70" height="0.950" fill="#eef0ff"/><rect x="12.90" y="14.600" width="1" height="1.400" fill="#3054d8"/><rect x="6" y="4.1" width="5.2" height="11.9" rx="0.5" fill="#1468d8"/><rect x="7.1" y="5.0" width="2.90" height="10.10" fill="url(#gwp)"/><rect x="7.1" y="5.2" width="2.90" height="0.950" fill="#eef0ff"/><rect x="7.1" y="7.2" width="2.90" height="0.950" fill="#eef0ff"/><rect x="7.1" y="9.2" width="2.90" height="0.950" fill="#eef0ff"/><rect x="7.1" y="11.1" width="2.90" height="0.950" fill="#eef0ff"/><rect x="7.1" y="13.1" width="2.90" height="0.950" fill="#eef0ff"/><rect x="8.00" y="14.600" width="1" height="1.400" fill="#3054d8"/><rect x="5.900" y="1" width="1" height="3.100" fill="#303030"/><path d="M6.900 1C8.500 0.600 9.500 1 10 1.800L11.200 2.400V3H6.900z" fill="#e80000"/></svg>
<span class="t" style="left:81.40px;top:220px;font-size:11px;color:#000;letter-spacing:-0.000px;">Проект по 421 пр</span>
<span class="t" style="left:176.30px;top:220px;font-size:11px;color:#0000ff;letter-spacing:0.083px;">[2]</span>
<div class="a" style="left:55px;top:244px;width:5px;height:1px;background-image:linear-gradient(90deg,#808080 50%,transparent 50%);background-size:2px 1px;"></div>
<div class="a" style="left:45px;top:240px;width:9px;height:9px;background:#fff;box-sizing:border-box;border:1px solid #808080;"></div>
<div class="a" style="left:47px;top:244px;width:5px;height:1px;background:#000;"></div>
<div class="a" style="left:49px;top:242px;width:1px;height:5px;background:#000;"></div>
<svg style="left:60px;top:236px" width="16" height="16" viewBox="0 0 16 16"><rect x="1" y="6" width="5.2" height="10" rx="0.5" fill="#2470d4"/><rect x="2.1" y="6.9" width="2.90" height="8.20" fill="url(#gwp)"/><rect x="2.1" y="7.2" width="2.90" height="0.950" fill="#eef0ff"/><rect x="2.1" y="9.2" width="2.90" height="0.950" fill="#eef0ff"/><rect x="2.1" y="11.1" width="2.90" height="0.950" fill="#eef0ff"/><rect x="2.1" y="13.1" width="2.90" height="0.950" fill="#eef0ff"/><rect x="3.00" y="14.600" width="1" height="1.400" fill="#3054d8"/><rect x="11" y="8.1" width="5" height="7.9" rx="0.5" fill="#2470d4"/><rect x="12.1" y="9.0" width="2.70" height="6.10" fill="url(#gwp)"/><rect x="12.1" y="9.2" width="2.70" height="0.950" fill="#eef0ff"/><rect x="12.1" y="11.1" width="2.70" height="0.950" fill="#eef0ff"/><rect x="12.1" y="13.1" width="2.70" height="0.950" fill="#eef0ff"/><rect x="12.90" y="14.600" width="1" height="1.400" fill="#3054d8"/><rect x="6" y="4.1" width="5.2" height="11.9" rx="0.5" fill="#1468d8"/><rect x="7.1" y="5.0" width="2.90" height="10.10" fill="url(#gwp)"/><rect x="7.1" y="5.2" width="2.90" height="0.950" fill="#eef0ff"/><rect x="7.1" y="7.2" width="2.90" height="0.950" fill="#eef0ff"/><rect x="7.1" y="9.2" width="2.90" height="0.950" fill="#eef0ff"/><rect x="7.1" y="11.1" width="2.90" height="0.950" fill="#eef0ff"/><rect x="7.1" y="13.1" width="2.90" height="0.950" fill="#eef0ff"/><rect x="8.00" y="14.600" width="1" height="1.400" fill="#3054d8"/><rect x="5.900" y="1" width="1" height="3.100" fill="#303030"/><path d="M6.900 1C8.500 0.600 9.500 1 10 1.800L11.200 2.400V3H6.900z" fill="#e80000"/></svg>
<span class="t" style="left:81.40px;top:236px;font-size:11px;color:#000;letter-spacing:-0.015px;">Строительство школы</span>
<span class="t" style="left:201.30px;top:236px;font-size:11px;color:#0000ff;letter-spacing:0.083px;">[1]</span>
<div class="a" style="left:55px;top:260px;width:5px;height:1px;background-image:linear-gradient(90deg,#808080 50%,transparent 50%);background-size:2px 1px;"></div>
<div class="a" style="left:45px;top:256px;width:9px;height:9px;background:#fff;box-sizing:border-box;border:1px solid #808080;"></div>
<div class="a" style="left:47px;top:260px;width:5px;height:1px;background:#000;"></div>
<div class="a" style="left:49px;top:258px;width:1px;height:5px;background:#000;"></div>
<svg style="left:60px;top:252px" width="16" height="16" viewBox="0 0 16 16"><path d="M12 7.8V0.6l0.9-0.6l0.5 1.4l0.7 0.3v3.100l1.900 1.700V7.800z" fill="url(#gpv)"/><path d="M6.900 7.900V3.600l1.600-0.400l0.900 1.200l1.400 1.800V7.900z" fill="url(#gpv)"/><rect x="1" y="2.600" width="2.900" height="13.200" fill="#808080"/><ellipse cx="2.450" cy="4.9" rx="0.650" ry="0.950" fill="#fff"/><ellipse cx="2.450" cy="8" rx="0.650" ry="0.950" fill="#fff"/><ellipse cx="2.450" cy="11" rx="0.650" ry="0.950" fill="#fff"/><ellipse cx="2.450" cy="14" rx="0.650" ry="0.950" fill="#fff"/><rect x="0" y="0.850" width="12.200" height="0.950" fill="#848484"/><rect x="1" y="15" width="4.800" height="0.800" fill="#808080"/><circle cx="2.400" cy="1.300" r="1.200" fill="#f0eaff" stroke="#9060f0" stroke-width="0.800"/><path d="M9.400 1.800L5.100 7.9M9.400 1.800L13.600 7.9" stroke="#701020" stroke-width="1.100" stroke-dasharray="1 0.400"/><rect x="3.900" y="7.9" width="11" height="2.800" fill="url(#gor)"/><rect x="6.900" y="10.700" width="4.100" height="5.300" fill="url(#gbl)"/><rect x="12" y="10.700" width="4" height="5.300" fill="url(#gbl)"/><circle cx="9.5" cy="12.5" r="0.550" fill="#e8f4ff"/><circle cx="9.5" cy="14.4" r="0.550" fill="#e8f4ff"/><circle cx="14.4" cy="12.5" r="0.550" fill="#e8f4ff"/><circle cx="14.4" cy="14.4" r="0.550" fill="#e8f4ff"/><path d="M6.9 11.9l0.900 0.600l-0.900 0.600z" fill="#fff"/><path d="M6.9 13.8l0.900 0.600l-0.900 0.600z" fill="#fff"/><path d="M12 11.9l0.900 0.600l-0.900 0.600z" fill="#fff"/><path d="M12 13.8l0.900 0.600l-0.900 0.600z" fill="#fff"/></svg>
<span class="t" style="left:81.40px;top:252px;font-size:11px;color:#000;letter-spacing:-0.038px;">Строительство школы на 1025 человек</span>
<span class="t" style="left:287.30px;top:252px;font-size:11px;color:#0000ff;letter-spacing:0.083px;">[1]</span>
<div class="a" style="left:55px;top:276px;width:5px;height:1px;background-image:linear-gradient(90deg,#808080 50%,transparent 50%);background-size:2px 1px;"></div>
<div class="a" style="left:45px;top:272px;width:9px;height:9px;background:#fff;box-sizing:border-box;border:1px solid #808080;"></div>
<div class="a" style="left:47px;top:276px;width:5px;height:1px;background:#000;"></div>
<div class="a" style="left:49px;top:274px;width:1px;height:5px;background:#000;"></div>
<svg style="left:60px;top:268px" width="16" height="16" viewBox="0 0 16 16"><rect x="3.2" y="1" width="2.3" height="6" fill="#f4a820" stroke="#a86020" stroke-width="0.6"/><rect x="11" y="4" width="2.4" height="4.5" fill="#f4a820" stroke="#a86020" stroke-width="0.6"/><path d="M2.7 9.3L8 3.6l5.3 5.7v6.2h-10.6z" fill="#fff"/><path d="M2.7 9v6.5M13.3 9v6.5" stroke="#9a9a9a" stroke-width="0.9"/><path d="M1 15.5h14" stroke="#8c8c8c" stroke-width="0.9"/><path d="M1 9.8L8 2.6l7 7.2" fill="none" stroke="#c4702c" stroke-width="1.2"/><rect x="4" y="8" width="7" height="3.800" rx="0.800" fill="url(#grl)"/><path d="M11 9.9h0.900v2.800l-4 0.800" stroke="#101010" stroke-width="1" fill="none"/><circle cx="7" cy="14.4" r="1.200" fill="#e81010"/></svg>
<span class="t" style="left:81.40px;top:268px;font-size:11px;color:#000;letter-spacing:0.006px;">Объект</span>
<div class="a" style="left:55px;top:292px;width:5px;height:1px;background-image:linear-gradient(90deg,#808080 50%,transparent 50%);background-size:2px 1px;"></div>
<div class="a" style="left:45px;top:288px;width:9px;height:9px;background:#fff;box-sizing:border-box;border:1px solid #808080;"></div>
<div class="a" style="left:47px;top:292px;width:5px;height:1px;background:#000;"></div>
<svg style="left:60px;top:284px" width="16" height="16" viewBox="0 0 16 16"><rect x="3.2" y="1" width="2.3" height="6" fill="#f4a820" stroke="#a86020" stroke-width="0.6"/><rect x="11" y="4" width="2.4" height="4.5" fill="#f4a820" stroke="#a86020" stroke-width="0.6"/><path d="M2.7 9.3L8 3.6l5.3 5.7v6.2h-10.6z" fill="#fff"/><path d="M2.7 9v6.5M13.3 9v6.5" stroke="#9a9a9a" stroke-width="0.9"/><path d="M1 15.5h14" stroke="#8c8c8c" stroke-width="0.9"/><path d="M1 9.8L8 2.6l7 7.2" fill="none" stroke="#c4702c" stroke-width="1.2"/><rect x="4.2" y="10.5" width="2.4" height="5" fill="#ffc028" stroke="#a86020" stroke-width="0.6"/><rect x="8.6" y="10" width="2.6" height="3.4" fill="#5c98ec"/><path d="M9.9 10v3.4" stroke="#a8c8ff" stroke-width="0.5"/></svg>
<div class="a" style="left:79px;top:284px;width:117px;height:16px;background:#000;"></div>
<div class="a" style="left:79px;top:284px;width:117px;height:16px;background:#0078d7;box-sizing:border-box;border:1px dotted #f0a050;background-clip:padding-box;"></div>
<span class="t" style="left:81.40px;top:284px;font-size:11px;color:#fff;letter-spacing:-0.015px;">Строительство школы</span>
<div class="a" style="left:74px;top:308px;width:5px;height:1px;background-image:linear-gradient(90deg,#808080 50%,transparent 50%);background-size:2px 1px;"></div>
<div class="a" style="left:64px;top:304px;width:9px;height:9px;background:#fff;box-sizing:border-box;border:1px solid #808080;"></div>
<div class="a" style="left:66px;top:308px;width:5px;height:1px;background:#000;"></div>
<div class="a" style="left:68px;top:306px;width:1px;height:5px;background:#000;"></div>
<svg style="left:79px;top:300px" width="16" height="16" viewBox="0 0 16 16"><path d="M0.3 1.2h8l0.8 2.2h6.7v11.4h-15.5z" fill="#b4a8a0"/><path d="M1 1.9h6.6l.6 1.4h-7.2z" fill="#40b8ff"/><rect x="1" y="4" width="14" height="10" fill="url(#gb)"/></svg>
<span class="t" style="left:100.40px;top:300px;font-size:11px;color:#000;letter-spacing:0.308px;">СТРУКТУРА</span>
<div class="a" style="left:74px;top:324px;width:5px;height:1px;background-image:linear-gradient(90deg,#808080 50%,transparent 50%);background-size:2px 1px;"></div>
<div class="a" style="left:64px;top:320px;width:9px;height:9px;background:#fff;box-sizing:border-box;border:1px solid #808080;"></div>
<div class="a" style="left:66px;top:324px;width:5px;height:1px;background:#000;"></div>
<div class="a" style="left:68px;top:322px;width:1px;height:5px;background:#000;"></div>
<svg style="left:79px;top:316px" width="16" height="16" viewBox="0 0 16 16"><path d="M0.3 1.2h8l0.8 2.2h6.7v11.4h-15.5z" fill="#b4a8a0"/><path d="M1 1.9h6.6l.6 1.4h-7.2z" fill="#40b8ff"/><rect x="1" y="4" width="14" height="10" fill="url(#gb)"/></svg>
<span class="t" style="left:100.40px;top:316px;font-size:11px;color:#000;letter-spacing:-0.470px;">СМЕТЫ</span>
<div class="a" style="left:74px;top:340px;width:5px;height:1px;background-image:linear-gradient(90deg,#808080 50%,transparent 50%);background-size:2px 1px;"></div>
<div class="a" style="left:64px;top:336px;width:9px;height:9px;background:#fff;box-sizing:border-box;border:1px solid #808080;"></div>
<div class="a" style="left:66px;top:340px;width:5px;height:1px;background:#000;"></div>
<div class="a" style="left:68px;top:338px;width:1px;height:5px;background:#000;"></div>
<svg style="left:79px;top:332px" width="16" height="16" viewBox="0 0 16 16"><path d="M0.3 1.2h8l0.8 2.2h6.7v11.4h-15.5z" fill="#b4a8a0"/><path d="M1 1.9h6.6l.6 1.4h-7.2z" fill="#40b8ff"/><rect x="1" y="4" width="14" height="10" fill="url(#gb)"/></svg>
<span class="t" style="left:100.40px;top:332px;font-size:11px;color:#000;letter-spacing:-0.091px;">ВЫПОЛНЕНИЯ</span>
<div class="a" style="left:70px;top:356px;width:9px;height:1px;background-image:linear-gradient(90deg,#808080 50%,transparent 50%);background-size:2px 1px;"></div>
<svg style="left:79px;top:348px" width="16" height="16" viewBox="0 0 16 16"><path d="M0.3 1.2h8l0.8 2.2h6.7v11.4h-15.5z" fill="#b4a8a0"/><path d="M1 1.9h6.6l.6 1.4h-7.2z" fill="#40b8ff"/><rect x="1" y="4" width="14" height="10" fill="url(#gb)"/></svg>
<span class="t" style="left:100.40px;top:348px;font-size:11px;color:#000;letter-spacing:-0.254px;">М-29</span>
<div class="a" style="left:70px;top:372px;width:9px;height:1px;background-image:linear-gradient(90deg,#808080 50%,transparent 50%);background-size:2px 1px;"></div>
<svg style="left:79px;top:364px" width="16" height="16" viewBox="0 0 16 16"><path d="M0.3 1.2h8l0.8 2.2h6.7v11.4h-15.5z" fill="#b4a8a0"/><path d="M1 1.9h6.6l.6 1.4h-7.2z" fill="#40b8ff"/><rect x="1" y="4" width="14" height="10" fill="url(#gb)"/></svg>
<span class="t" style="left:100.40px;top:364px;font-size:11px;color:#000;letter-spacing:-0.311px;">РЕСУРСНЫЕ РАСЧЕТЫ</span>
<div class="a" style="left:70px;top:388px;width:9px;height:1px;background-image:linear-gradient(90deg,#808080 50%,transparent 50%);background-size:2px 1px;"></div>
<svg style="left:79px;top:380px" width="16" height="16" viewBox="0 0 16 16"><path d="M0.3 1.2h8l0.8 2.2h6.7v11.4h-15.5z" fill="#b4a8a0"/><path d="M1 1.9h6.6l.6 1.4h-7.2z" fill="#40b8ff"/><rect x="1" y="4" width="14" height="10" fill="url(#gb)"/></svg>
<span class="t" style="left:100.40px;top:380px;font-size:11px;color:#000;letter-spacing:-0.239px;">КС-3</span>
<div class="a" style="left:36px;top:404px;width:5px;height:1px;background-image:linear-gradient(90deg,#808080 50%,transparent 50%);background-size:2px 1px;"></div>
<div class="a" style="left:26px;top:400px;width:9px;height:9px;background:#fff;box-sizing:border-box;border:1px solid #808080;"></div>
<div class="a" style="left:28px;top:404px;width:5px;height:1px;background:#000;"></div>
<div class="a" style="left:30px;top:402px;width:1px;height:5px;background:#000;"></div>
<svg style="left:41px;top:396px" width="16" height="16" viewBox="0 0 16 16"><rect x="1" y="6" width="5.2" height="10" rx="0.5" fill="#2470d4"/><rect x="2.1" y="6.9" width="2.90" height="8.20" fill="url(#gwp)"/><rect x="2.1" y="7.2" width="2.90" height="0.950" fill="#eef0ff"/><rect x="2.1" y="9.2" width="2.90" height="0.950" fill="#eef0ff"/><rect x="2.1" y="11.1" width="2.90" height="0.950" fill="#eef0ff"/><rect x="2.1" y="13.1" width="2.90" height="0.950" fill="#eef0ff"/><rect x="3.00" y="14.600" width="1" height="1.400" fill="#3054d8"/><rect x="11" y="8.1" width="5" height="7.9" rx="0.5" fill="#2470d4"/><rect x="12.1" y="9.0" width="2.70" height="6.10" fill="url(#gwp)"/><rect x="12.1" y="9.2" width="2.70" height="0.950" fill="#eef0ff"/><rect x="12.1" y="11.1" width="2.70" height="0.950" fill="#eef0ff"/><rect x="12.1" y="13.1" width="2.70" height="0.950" fill="#eef0ff"/><rect x="12.90" y="14.600" width="1" height="1.400" fill="#3054d8"/><rect x="6" y="4.1" width="5.2" height="11.9" rx="0.5" fill="#1468d8"/><rect x="7.1" y="5.0" width="2.90" height="10.10" fill="url(#gwp)"/><rect x="7.1" y="5.2" width="2.90" height="0.950" fill="#eef0ff"/><rect x="7.1" y="7.2" width="2.90" height="0.950" fill="#eef0ff"/><rect x="7.1" y="9.2" width="2.90" height="0.950" fill="#eef0ff"/><rect x="7.1" y="11.1" width="2.90" height="0.950" fill="#eef0ff"/><rect x="7.1" y="13.1" width="2.90" height="0.950" fill="#eef0ff"/><rect x="8.00" y="14.600" width="1" height="1.400" fill="#3054d8"/><rect x="5.900" y="1" width="1" height="3.100" fill="#303030"/><path d="M6.900 1C8.500 0.600 9.500 1 10 1.800L11.200 2.400V3H6.900z" fill="#e80000"/></svg>
<span class="t" style="left:62.40px;top:396px;font-size:11px;color:#000;letter-spacing:0.063px;">Новый проект 3</span>
<span class="t" style="left:150.10px;top:396px;font-size:11px;color:#0000ff;letter-spacing:0.183px;">[1]</span>
<div class="a" style="left:32px;top:420px;width:9px;height:1px;background-image:linear-gradient(90deg,#808080 50%,transparent 50%);background-size:2px 1px;"></div>
<svg style="left:41px;top:412px" width="16" height="16" viewBox="0 0 16 16"><path d="M2.8 1h3.5l.8 1h6.2v7.5h-10.5z" fill="#ffe44c" stroke="#b0a0c0" stroke-width="0.7"/><path d="M3.3 5h9.5v4h-9.5z" fill="#fff490" opacity="0.7"/><path d="M0.3 7.3C2 8 3 9 4 9.5L7 8.5h5.5l1.5-.8c1 1-1 3.5-3 4.8c-2 1.2-4.5 1.3-6.5 0C3 11.500 1.500 9.500 .3 7.300z" fill="#f4a858" stroke="#c87428" stroke-width="0.6"/><path d="M5.500 10.300c1.500.6 3.500.4 4.800-.5" stroke="#a85c20" stroke-width="0.9" fill="none"/><path d="M15.400 6v7.500" stroke="#202020" stroke-width="1.1"/></svg>
<span class="t" style="left:62.40px;top:412px;font-size:11px;color:#000;letter-spacing:-0.430px;">ОБМЕН</span>
<span class="t" style="left:108.10px;top:412px;font-size:11px;color:#0000ff;letter-spacing:0.183px;">[0]</span>
<div class="a" style="left:36px;top:436px;width:5px;height:1px;background-image:linear-gradient(90deg,#808080 50%,transparent 50%);background-size:2px 1px;"></div>
<div class="a" style="left:26px;top:432px;width:9px;height:9px;background:#fff;box-sizing:border-box;border:1px solid #808080;"></div>
<div class="a" style="left:28px;top:436px;width:5px;height:1px;background:#000;"></div>
<div class="a" style="left:30px;top:434px;width:1px;height:5px;background:#000;"></div>
<svg style="left:41px;top:428px" width="16" height="16" viewBox="0 0 16 16"><path d="M4 4.300C4 1.500 6 .4 7.500.4S11 1.500 11 4.300z" fill="#e8f0ff" stroke="#b0c0d8" stroke-width="0.6"/><path d="M3.500 4.300h8L10.800 15H4.200z" fill="#5c6c78"/><path d="M2 7.700h11M3 15.300h9" stroke="#506070" stroke-width="1.1"/><path d="M4.500 5.500l5.500 9M7 4.500l4 7M4.200 9l3.500 6M10.500 5.500L5 14.500M8 4.500l-4 7M10.800 9L7.300 15" stroke="#c8d4dc" stroke-width="0.5"/><rect x="5.500" y="6.800" width="4" height="1.400" fill="#e0e8f0"/></svg>
<span class="t" style="left:62.40px;top:428px;font-size:11px;color:#000;letter-spacing:0.020px;">КОРЗИНА</span>
</div>
<div class="g" id="context-menu">
<div class="a" style="left:181px;top:293px;width:336px;height:612px;background:#f0f0f0;box-sizing:border-box;border:1px solid #a0a0a0;"></div>
<span class="t" style="left:206.10px;top:299px;font-size:12px;color:#a0a0a0;font-weight:bold;letter-spacing:-0.344px;text-shadow:1px 1px 0 #fff;">Открыть</span>
<span class="t" style="left:206.10px;top:320px;font-size:12px;color:#000;letter-spacing:-0.053px;">Найти объект</span>
<div class="a" style="left:185px;top:342px;width:328px;height:1px;background:#a0a0a0;"></div>
<div class="a" style="left:185px;top:343px;width:328px;height:1px;background:#fff;"></div>
<span class="t" style="left:206.10px;top:349px;font-size:12px;color:#000;letter-spacing:0.068px;">Открыть справочник конъюнктурного анализа...</span>
<div class="a" style="left:185px;top:371px;width:328px;height:1px;background:#a0a0a0;"></div>
<div class="a" style="left:185px;top:372px;width:328px;height:1px;background:#fff;"></div>
<span class="t" style="left:206.10px;top:378px;font-size:12px;color:#000;letter-spacing:-0.150px;">Добавить</span>
<svg style="left:503px;top:381px" width="4" height="7" viewBox="0 0 4 7"><path d="M0 0l4 3.5l-4 3.5z" fill="#000"/></svg>
<span class="t" style="left:206.10px;top:399px;font-size:12px;color:#000;letter-spacing:-0.082px;">Переименовать</span>
<span class="t" style="left:206.10px;top:420px;font-size:12px;color:#000;letter-spacing:-0.071px;">Пересчитать объект в другую базу...</span>
<span class="t" style="left:206.10px;top:441px;font-size:12px;color:#000;letter-spacing:-0.003px;">Групповые операции ...</span>
<div class="a" style="left:185px;top:463px;width:328px;height:1px;background:#a0a0a0;"></div>
<div class="a" style="left:185px;top:464px;width:328px;height:1px;background:#fff;"></div>
<span class="t" style="left:206.10px;top:470px;font-size:12px;color:#000;letter-spacing:-0.115px;">Объединение смет...</span>
<svg style="left:185px;top:470px" width="16" height="16" viewBox="0 0 16 16"><path d="M4.5 5.75L8.0 1.6l3.5 4.15v4.05h-7z" fill="#fff" stroke="#b8b8b8" stroke-width="0.5"/><path d="M3.5 6.38L8.0 0.8l4.5 5.58" fill="none" stroke="#a04010" stroke-width="1.3"/><rect x="8.3" y="6" width="2.2" height="2.2" fill="#78b4f8"/><rect x="5.8" y="6.3" width="1.3" height="2.6" fill="#e0a050"/><path d="M1 12.18L3.8 8.8l2.8 3.38v3.42h-5.6z" fill="#fff" stroke="#b8b8b8" stroke-width="0.5"/><path d="M0 12.712L3.8 8l3.8 4.712" fill="none" stroke="#a04010" stroke-width="1.3"/><path d="M9.4 12.18L12.2 8.8l2.8 3.38v3.42h-5.6z" fill="#fff" stroke="#b8b8b8" stroke-width="0.5"/><path d="M8.4 12.712L12.2 8l3.8 4.712" fill="none" stroke="#a04010" stroke-width="1.3"/><rect x="3" y="12.6" width="1.5" height="2.8" fill="#e8a030"/><rect x="11.4" y="12.6" width="1.5" height="2.8" fill="#e8a030"/><path d="M5 0.3v2.4" stroke="#a04010" stroke-width="1.1"/></svg>
<span class="t" style="left:206.10px;top:491px;font-size:12px;color:#000;letter-spacing:-0.121px;">Создать объединенный акт...</span>
<div class="a" style="left:185px;top:513px;width:328px;height:1px;background:#a0a0a0;"></div>
<div class="a" style="left:185px;top:514px;width:328px;height:1px;background:#fff;"></div>
<span class="t" style="left:206.10px;top:520px;font-size:12px;color:#000;letter-spacing:-0.160px;">Сравнить сметы...</span>
<span class="t" style="left:206.10px;top:541px;font-size:12px;color:#a0a0a0;letter-spacing:-0.265px;">Экспертиза акта...</span>
<div class="a" style="left:185px;top:563px;width:328px;height:1px;background:#a0a0a0;"></div>
<div class="a" style="left:185px;top:564px;width:328px;height:1px;background:#fff;"></div>
<span class="t" style="left:206.10px;top:570px;font-size:12px;color:#000;letter-spacing:-0.338px;">Удалить</span>
<span class="t" style="left:459.10px;top:570px;font-size:12px;color:#000;letter-spacing:0.016px;">Ctrl+Del</span>
<svg style="left:185px;top:570px" width="16" height="16" viewBox="0 0 16 16"><path d="M3 2.8L13 13.2M13.2 2.8L3 13.2" stroke="#f04828" stroke-width="1.7" fill="none"/></svg>
<span class="t" style="left:206.10px;top:591px;font-size:12px;color:#a0a0a0;letter-spacing:-0.149px;">Восстановить</span>
<div class="a" style="left:185px;top:613px;width:328px;height:1px;background:#a0a0a0;"></div>
<div class="a" style="left:185px;top:614px;width:328px;height:1px;background:#fff;"></div>
<span class="t" style="left:206.10px;top:620px;font-size:12px;color:#a0a0a0;letter-spacing:-0.199px;">Переместить вверх</span>
<span class="t" style="left:206.10px;top:641px;font-size:12px;color:#a0a0a0;letter-spacing:-0.138px;">Переместить вниз</span>
<div class="a" style="left:185px;top:663px;width:328px;height:1px;background:#a0a0a0;"></div>
<div class="a" style="left:185px;top:664px;width:328px;height:1px;background:#fff;"></div>
<span class="t" style="left:206.10px;top:670px;font-size:12px;color:#a0a0a0;letter-spacing:-0.018px;">Копировать элемент структуры</span>
<span class="t" style="left:468.00px;top:670px;font-size:12px;color:#a0a0a0;letter-spacing:0.111px;">Ctrl+C</span>
<span class="t" style="left:206.10px;top:691px;font-size:12px;color:#000;letter-spacing:-0.134px;">Вставить элемент структуры</span>
<span class="t" style="left:469.00px;top:691px;font-size:12px;color:#000;letter-spacing:0.043px;">Ctrl+V</span>
<div class="a" style="left:185px;top:713px;width:328px;height:1px;background:#a0a0a0;"></div>
<div class="a" style="left:185px;top:714px;width:328px;height:1px;background:#fff;"></div>
<span class="t" style="left:206.10px;top:720px;font-size:12px;color:#000;letter-spacing:0.041px;">Создать копию папки</span>
<div class="a" style="left:185px;top:742px;width:328px;height:1px;background:#a0a0a0;"></div>
<div class="a" style="left:185px;top:743px;width:328px;height:1px;background:#fff;"></div>
<span class="t" style="left:206.10px;top:749px;font-size:12px;color:#000;letter-spacing:0.001px;">Скопировать остатки выполнения в новый объект</span>
<div class="a" style="left:185px;top:771px;width:328px;height:1px;background:#a0a0a0;"></div>
<div class="a" style="left:185px;top:772px;width:328px;height:1px;background:#fff;"></div>
<span class="t" style="left:206.10px;top:778px;font-size:12px;color:#000;letter-spacing:-0.035px;">Обновить</span>
<svg style="left:185px;top:778px" width="16" height="16" viewBox="0 0 16 16"><path d="M6.9 13.7A5.2 5.2 0 0 1 4.2 4.7" fill="none" stroke="#1c9c1c" stroke-width="2.3"/><path d="M2.1 2.4L6.9 1.8L6.3 6.8z" fill="#1c9c1c"/><path d="M9 2.3A5.2 5.2 0 0 1 11.7 11.3" fill="none" stroke="#1c9c1c" stroke-width="2.3"/><path d="M13.8 13.6L9 14.2L9.600 9.200z" fill="#0c700c"/></svg>
<div class="a" style="left:185px;top:800px;width:328px;height:1px;background:#a0a0a0;"></div>
<div class="a" style="left:185px;top:801px;width:328px;height:1px;background:#fff;"></div>
<span class="t" style="left:206.10px;top:807px;font-size:12px;color:#000;letter-spacing:-0.016px;">Экспорт</span>
<svg style="left:503px;top:810px" width="4" height="7" viewBox="0 0 4 7"><path d="M0 0l4 3.5l-4 3.5z" fill="#000"/></svg>
<svg style="left:185px;top:807px" width="16" height="16" viewBox="0 0 16 16"><path d="M4.2 1.200h9.700v14.300h-12.700v-11.300z" fill="#f4f4f4" stroke="#9c9c9c" stroke-width="0.9"/><path d="M1.2 4.200h3v-3" fill="#fff" stroke="#9c9c9c" stroke-width="0.7"/><path d="M9.8 9h3v-2l3.300 3l-3.300 3v-2h-3z" fill="#1464e0"/></svg>
<div class="a" style="left:204px;top:825px;width:307px;height:21px;background:#0078d7;"></div>
<div class="a" style="left:184px;top:825px;width:20px;height:21px;box-sizing:border-box;border-top:1px solid #fff;border-left:1px solid #fff;border-right:1px solid #a0a0a0;border-bottom:1px solid #a0a0a0;"></div>
<span class="t" style="left:206.10px;top:828px;font-size:12px;color:#fff;letter-spacing:0.409px;">Импорт</span>
<svg style="left:503px;top:831px" width="4" height="7" viewBox="0 0 4 7"><path d="M0 0l4 3.5l-4 3.5z" fill="#fff"/></svg>
<svg style="left:185px;top:828px" width="16" height="16" viewBox="0 0 16 16"><path d="M5.2 1.200h9.700v14.300h-12.700v-11.300z" fill="#f4f4f4" stroke="#9c9c9c" stroke-width="0.9"/><path d="M2.2 4.200h3v-3" fill="#fff" stroke="#9c9c9c" stroke-width="0.7"/><path d="M0.8 10h3v-2l3.300 3l-3.300 3v-2h-3z" fill="#1464e0"/></svg>
<div class="a" style="left:185px;top:850px;width:328px;height:1px;background:#a0a0a0;"></div>
<div class="a" style="left:185px;top:851px;width:328px;height:1px;background:#fff;"></div>
<span class="t" style="left:206.10px;top:857px;font-size:12px;color:#000;letter-spacing:-0.037px;">Настроить это меню...</span>
<div class="a" style="left:185px;top:879px;width:328px;height:1px;background:#a0a0a0;"></div>
<div class="a" style="left:185px;top:880px;width:328px;height:1px;background:#fff;"></div>
<span class="t" style="left:206.10px;top:885px;font-size:12px;color:#000;letter-spacing:-0.759px;">Вид</span>
<svg style="left:503px;top:888px" width="4" height="7" viewBox="0 0 4 7"><path d="M0 0l4 3.5l-4 3.5z" fill="#000"/></svg>
</div>
<div class="g" id="import-submenu">
<div class="a" style="left:511px;top:822px;width:331px;height:277px;background:#f0f0f0;box-sizing:border-box;border:1px solid #a0a0a0;"></div>
<span class="t" style="left:535.70px;top:828px;font-size:12px;color:#000;letter-spacing:-0.026px;">Объектов (.sob/.sobx)</span>
<div class="a" style="left:515px;top:850px;width:323px;height:1px;background:#a0a0a0;"></div>
<div class="a" style="left:515px;top:851px;width:323px;height:1px;background:#fff;"></div>
<span class="t" style="left:535.70px;top:857px;font-size:12px;color:#000;letter-spacing:-0.224px;">Объекта в формате XML</span>
<div class="a" style="left:515px;top:879px;width:323px;height:1px;background:#a0a0a0;"></div>
<div class="a" style="left:515px;top:880px;width:323px;height:1px;background:#fff;"></div>
<span class="t" style="left:535.70px;top:886px;font-size:12px;color:#000;letter-spacing:-0.176px;">Акта (.sac/.sacx)</span>
<span class="t" style="left:535.70px;top:907px;font-size:12px;color:#000;letter-spacing:-0.194px;">Акта в формате XML</span>
<div class="a" style="left:515px;top:929px;width:323px;height:1px;background:#a0a0a0;"></div>
<div class="a" style="left:515px;top:930px;width:323px;height:1px;background:#fff;"></div>
<span class="t" style="left:535.70px;top:936px;font-size:12px;color:#000;letter-spacing:-0.192px;">КС-3 в формате XML</span>
<div class="a" style="left:515px;top:958px;width:323px;height:1px;background:#a0a0a0;"></div>
<div class="a" style="left:515px;top:959px;width:323px;height:1px;background:#fff;"></div>
<span class="t" style="left:535.70px;top:965px;font-size:12px;color:#000;letter-spacing:-0.055px;">Локальной сметы (.slsx)</span>
<span class="t" style="left:535.70px;top:986px;font-size:12px;color:#000;letter-spacing:-0.080px;">Локальной сметы в формате XML</span>
<span class="t" style="left:535.70px;top:1007px;font-size:12px;color:#000;letter-spacing:0.031px;">Локальной сметы со структурой проекта (.spxml)</span>
<div class="a" style="left:515px;top:1029px;width:323px;height:1px;background:#a0a0a0;"></div>
<div class="a" style="left:515px;top:1030px;width:323px;height:1px;background:#fff;"></div>
<span class="t" style="left:535.70px;top:1036px;font-size:12px;color:#000;letter-spacing:-0.278px;">Из АРПС</span>
<span class="t" style="left:535.70px;top:1057px;font-size:12px;color:#000;letter-spacing:0.030px;">Из "ГРАНД-Смета" (базисно-индексный метод)</span>
<span class="t" style="left:535.70px;top:1078px;font-size:12px;color:#000;letter-spacing:0.018px;">Из "ГРАНД-Смета" (ресурсный метод)</span>
</div>
<div class="g" id="annotations">
<svg style="left:0;top:0" width="1750" height="1125" viewBox="0 0 1750 1125"><line x1="125.7" y1="297.5" x2="320.3" y2="776" stroke="#ff0000" stroke-width="3.2"/><path d="M328.5 795L312.9 777L327.6 771.1z" fill="#ff0000"/><rect x="180.8" y="797.9" width="337" height="50.9" fill="none" stroke="#ff0000" stroke-width="3.2"/><rect x="512.2" y="823.7" width="329.4" height="26" fill="none" stroke="#ff0000" stroke-width="3.3"/></svg>
</div>
</body></html>
